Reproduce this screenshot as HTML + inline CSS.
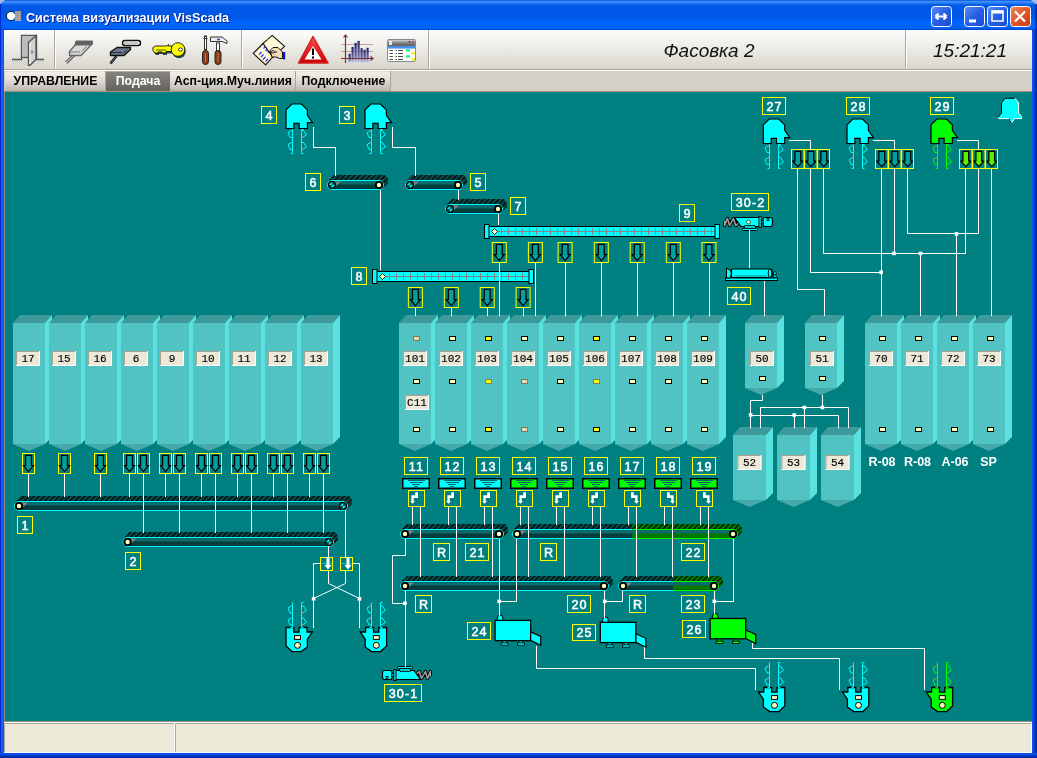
<!DOCTYPE html><html><head><meta charset="utf-8"><title>VisScada</title><style>html,body{margin:0;padding:0;width:1037px;height:758px;overflow:hidden;background:#0041c8}svg{display:block;will-change:transform}</style></head><body>
<svg width="1037" height="758" viewBox="0 0 1037 758">
<defs>
<pattern id="hatch" width="3.6" height="5" patternUnits="userSpaceOnUse" patternTransform="rotate(45)"><rect width="3.6" height="5" fill="#0b4848"/><rect x="0" y="0" width="1.1" height="5" fill="#000"/></pattern>
<pattern id="ghatch" width="3.6" height="5" patternUnits="userSpaceOnUse" patternTransform="rotate(45)"><rect width="3.6" height="5" fill="#007800"/><rect x="0" y="0" width="1.1" height="5" fill="#000"/></pattern>
<linearGradient id="tbar" x1="0" y1="0" x2="0" y2="1">
<stop offset="0" stop-color="#0040d0"/><stop offset="0.04" stop-color="#3d95ff"/><stop offset="0.1" stop-color="#2a7cf5"/><stop offset="0.17" stop-color="#0058e6"/><stop offset="0.6" stop-color="#0058e8"/><stop offset="0.72" stop-color="#0066ff"/><stop offset="0.93" stop-color="#0064fc"/><stop offset="1" stop-color="#0041c8"/></linearGradient>
<linearGradient id="tool" x1="0" y1="0" x2="0" y2="1"><stop offset="0" stop-color="#fdfdfc"/><stop offset="0.35" stop-color="#f1f0ec"/><stop offset="1" stop-color="#d9d5cc"/></linearGradient>
<linearGradient id="tab" x1="0" y1="0" x2="0" y2="1"><stop offset="0" stop-color="#f2f0e6"/><stop offset="0.5" stop-color="#dcdad2"/><stop offset="1" stop-color="#bab8b1"/></linearGradient><linearGradient id="tabsel" x1="0" y1="0" x2="0" y2="1"><stop offset="0" stop-color="#878580"/><stop offset="1" stop-color="#64625c"/></linearGradient>
<linearGradient id="btn" x1="0" y1="0" x2="1" y2="1"><stop offset="0" stop-color="#5a8df5"/><stop offset="0.5" stop-color="#2660e6"/><stop offset="1" stop-color="#1a48d0"/></linearGradient>
<linearGradient id="cbtn" x1="0" y1="0" x2="1" y2="1"><stop offset="0" stop-color="#f08a60"/><stop offset="0.5" stop-color="#e2572a"/><stop offset="1" stop-color="#c43c14"/></linearGradient>
<linearGradient id="frameR" x1="0" y1="0" x2="1" y2="0"><stop offset="0" stop-color="#0a5cf8"/><stop offset="1" stop-color="#0020a0"/></linearGradient>
<linearGradient id="frameB" x1="0" y1="0" x2="0" y2="1"><stop offset="0" stop-color="#0a5cf8"/><stop offset="1" stop-color="#00209a"/></linearGradient>
<linearGradient id="frameL" x1="0" y1="0" x2="1" y2="0"><stop offset="0" stop-color="#0010c8"/><stop offset="0.45" stop-color="#1a6cf8"/><stop offset="1" stop-color="#0a4ae0"/></linearGradient>
<linearGradient id="warn" x1="0" y1="0" x2="0" y2="1"><stop offset="0" stop-color="#ff5050"/><stop offset="1" stop-color="#c80000"/></linearGradient>
</defs>
<rect x="0" y="0" width="1037" height="758" fill="#0a50e0" />
<rect x="0" y="0" width="1037" height="30" fill="url(#tbar)" />
<rect x="0" y="30" width="4" height="728" fill="url(#frameL)" />
<rect x="1032" y="30" width="5" height="728" fill="url(#frameR)" />
<rect x="0" y="753" width="1037" height="5" fill="url(#frameB)" />
<polygon points="0,0 5,0 0,4" fill="#a9b9e2"/><polygon points="1037,0 1031,0 1037,5" fill="#a9b9e2"/>
<rect x="1035" y="4" width="2" height="26" fill="#0020a8" opacity="0.7"/><rect x="0" y="4" width="1" height="26" fill="#0018c0" opacity="0.7"/>
<rect x="4" y="30" width="1028" height="39" fill="url(#tool)" />
<rect x="4" y="69" width="1028" height="1" fill="#aca899" />
<rect x="4" y="70" width="1028" height="1.5" fill="#ffffff" />
<rect x="4" y="71" width="1028" height="21" fill="#d4d0c8" />
<rect x="54" y="30" width="1" height="39" fill="#aca899" />
<rect x="55" y="30" width="1" height="39" fill="#ffffff" />
<rect x="241" y="30" width="1" height="39" fill="#aca899" />
<rect x="242" y="30" width="1" height="39" fill="#ffffff" />
<rect x="428" y="30" width="1" height="39" fill="#aca899" />
<rect x="429" y="30" width="1" height="39" fill="#ffffff" />
<rect x="905" y="30" width="1" height="39" fill="#aca899" />
<rect x="906" y="30" width="1" height="39" fill="#ffffff" />
<rect x="5" y="71.5" width="101" height="19.5" fill="url(#tab)" />
<rect x="105" y="71" width="1" height="20" fill="#a8a498" />
<rect x="5" y="90" width="101" height="1" fill="#b8b4a8" />
<text x="55.5" y="85" font-family="Liberation Sans" font-size="12.3" fill="#000000" text-anchor="middle" font-weight="bold" font-style="normal" >УПРАВЛЕНИЕ</text>
<rect x="106" y="71.5" width="64" height="19.5" fill="url(#tabsel)" />
<text x="138.0" y="85" font-family="Liberation Sans" font-size="12.3" fill="#ffffff" text-anchor="middle" font-weight="bold" font-style="normal" >Подача</text>
<rect x="170" y="71.5" width="126" height="19.5" fill="url(#tab)" />
<rect x="295" y="71" width="1" height="20" fill="#a8a498" />
<rect x="170" y="90" width="126" height="1" fill="#b8b4a8" />
<text x="233.0" y="85" font-family="Liberation Sans" font-size="12.3" fill="#000000" text-anchor="middle" font-weight="bold" font-style="normal" >Асп-ция.Муч.линия</text>
<rect x="296" y="71.5" width="95" height="19.5" fill="url(#tab)" />
<rect x="390" y="71" width="1" height="20" fill="#a8a498" />
<rect x="296" y="90" width="95" height="1" fill="#b8b4a8" />
<text x="343.5" y="85" font-family="Liberation Sans" font-size="12.3" fill="#000000" text-anchor="middle" font-weight="bold" font-style="normal" >Подключение</text>
<rect x="4" y="92" width="1028" height="629" fill="#008080" />
<rect x="4" y="91" width="1028" height="1" fill="#a09080" />
<rect x="4" y="91" width="1" height="631" fill="#a09080" />
<rect x="4" y="721" width="1028" height="1" fill="#a09080" />
<rect x="4" y="722" width="1028" height="31" fill="#ece9d8" />
<rect x="4" y="722" width="1028" height="1" fill="#ffffff" />
<path d="M4.5,752 V723.5 H174" stroke="#aca899" fill="none"/>
<path d="M4.5,752.5 H174.5 V723" stroke="#ffffff" fill="none"/>
<path d="M175.5,752 V723.5 H1031" stroke="#aca899" fill="none"/>
<path d="M175.5,752.5 H1031.5 V723" stroke="#ffffff" fill="none"/>
<g>
<circle cx="11" cy="16" r="4.6" fill="#fff" stroke="#000" stroke-width="0.8"/>
<rect x="15" y="11" width="6" height="10" fill="#fff"/>
<rect x="15" y="11.5" width="6" height="0.9" fill="#333"/>
<rect x="15" y="13.5" width="6" height="0.9" fill="#333"/>
<rect x="15" y="15.5" width="6" height="0.9" fill="#333"/>
<rect x="15" y="17.5" width="6" height="0.9" fill="#333"/>
<rect x="15" y="19.5" width="6" height="0.9" fill="#333"/>
<text x="27" y="22.8" font-family="Liberation Sans" font-size="12.6" fill="#0a1e8c" text-anchor="start" font-weight="bold" font-style="normal" >Система визуализации VisScada</text>
<text x="26" y="21.8" font-family="Liberation Sans" font-size="12.6" fill="#ffffff" text-anchor="start" font-weight="bold" font-style="normal" >Система визуализации VisScada</text>
</g>
<rect x="931.5" y="6.5" width="20" height="20" rx="3" fill="url(#btn)" stroke="#ffffff" stroke-width="1"/>
<rect x="964.5" y="6.5" width="20" height="20" rx="3" fill="url(#btn)" stroke="#ffffff" stroke-width="1"/>
<rect x="987.5" y="6.5" width="20" height="20" rx="3" fill="url(#btn)" stroke="#ffffff" stroke-width="1"/>
<rect x="1010.5" y="6.5" width="20" height="20" rx="3" fill="url(#cbtn)" stroke="#ffffff" stroke-width="1"/>
<path d="M935.5,16.5 H946.5 M935.5,16.5 L938.5,13.5 M935.5,16.5 L938.5,19.5 M946.5,16.5 L943.5,13.5 M946.5,16.5 L943.5,19.5" stroke="#fff" stroke-width="2.2" fill="none"/>
<rect x="969" y="19.5" width="7" height="3" fill="#fff" />
<rect x="992" y="11" width="11" height="10" fill="none" stroke="#fff" stroke-width="1.5"/><rect x="992" y="10.5" width="11" height="3" fill="#fff"/>
<path d="M1015,11.5 L1025,21.5 M1025,11.5 L1015,21.5" stroke="#fff" stroke-width="2.2"/>
<text x="709" y="57" font-family="Liberation Sans" font-size="19" fill="#111" text-anchor="middle" font-weight="normal" font-style="italic" >Фасовка 2</text>
<text x="970" y="57" font-family="Liberation Sans" font-size="19" fill="#111" text-anchor="middle" font-weight="normal" font-style="italic" >15:21:21</text>
<pattern id="dith" width="2" height="2" patternUnits="userSpaceOnUse"><rect width="2" height="2" fill="#ecebe6"/><rect width="1" height="1" fill="#c4c4c4"/><rect x="1" y="1" width="1" height="1" fill="#c4c4c4"/></pattern>
<rect x="12" y="60" width="32" height="6" fill="url(#dith)" />
<path d="M12,59.5 H21.5 V35.5 H36.5 V59.5 H44" stroke="#555" stroke-width="1.4" fill="none"/>
<rect x="22" y="36" width="14" height="21" fill="#bdbdbd" />
<path d="M22,57.5 H29" stroke="#555" stroke-width="1.4"/>
<polygon points="28.5,42.2 36,35.8 36,59.3 30,65.3 28.5,65.3" fill="#d0d0d0" stroke="#555" stroke-width="1.4" stroke-linejoin="miter" />
<path d="M30,43 V64" stroke="#fff" stroke-width="1"/>
<ellipse cx="31.8" cy="52" rx="1" ry="1.5" fill="none" stroke="#777" stroke-width="0.8"/>
<path d="M77.5,53 L67,63.5 M75,53 L65.5,62" stroke="#666" stroke-width="1.1" fill="none"/>
<path d="M76,44 H92 L81,55.5 H69.5 V51.5 Z" fill="#d8d8d8" stroke="#666" stroke-width="1.3" stroke-linejoin="round"/>
<path d="M76,41 H92.5 V44 L91,45 H75 Z" fill="#606060" stroke="#666" stroke-width="1"/>
<path d="M70,52 H80.5 M86.5,46.5 L82,51" stroke="#777" stroke-width="1" fill="none"/>
<rect x="122.5" y="40.5" width="18" height="5" rx="2.5" fill="#fff" stroke="#111" stroke-width="1.5"/>
<path d="M124.5,43 H138.5" stroke="#222" stroke-width="1" stroke-dasharray="1,1"/>
<path d="M116.5,56 L110.5,63.5" stroke="#111" stroke-width="2.6"/><path d="M116.5,56 L110.5,63.5" stroke="#5b6f88" stroke-width="1"/>
<path d="M117,47.5 H130.5 V49.5 L124,55.5 H110.5 V52 Z" fill="#6a7a90" stroke="#111" stroke-width="1.4" stroke-linejoin="round"/>
<path d="M111,52.5 H122 M127.5,49.5 L123,53.5" stroke="#222" stroke-width="0.9" fill="none"/>
<g transform="translate(1,2)" fill="#2a4848"><path d="M153,47.5 L155.5,46 H167 L168.5,44.5 V46 H172 V51.5 H166 V53 H162 V52 H158 V53 H155 L153,50.5 Z"/><circle cx="178" cy="49.5" r="6.8"/></g>
<path d="M153,47.5 L155.5,46 H167 L168.5,44.5 V46 H172 V51.5 H166 V53 H162 V52 H158 V53 H155 L153,50.5 Z" fill="#ffff00" stroke="#111" stroke-width="0.9" stroke-linejoin="round"/>
<circle cx="178" cy="49.5" r="6.8" fill="#ffff00" stroke="#111" stroke-width="0.9"/>
<path d="M156,50 H166" stroke="#222" stroke-width="0.8"/>
<ellipse cx="180.5" cy="49.5" rx="2" ry="1.6" fill="#fff" stroke="#222" stroke-width="0.9"/>
<rect x="204.5" y="36" width="2" height="14" fill="#fff" stroke="#333" stroke-width="1"/>
<path d="M203.5,38.5 H207.5" stroke="#333" stroke-width="1"/>
<rect x="202.5" y="50.5" width="6" height="14" rx="3" fill="#8a3c16" stroke="#222" stroke-width="1"/>
<path d="M205.5,53 V62" stroke="#d08050" stroke-width="0.8"/>
<path d="M210.5,37 H222 L227,41 V43.5 L222,41.5 H210.5 Z" fill="#eee" stroke="#333" stroke-width="1"/>
<rect x="216.5" y="43" width="3" height="8" fill="#fff" stroke="#333" stroke-width="1"/>
<rect x="215" y="50.5" width="6" height="14" rx="3" fill="#8a3c16" stroke="#222" stroke-width="1"/>
<path d="M218,53 V62" stroke="#d08050" stroke-width="0.8"/>
<path d="M217,39.5 H220" stroke="#2040ff" stroke-width="1.5"/>
<path d="M263,43.5 L272.2,35.3 L284.6,46.3 L272.7,57.2 Z" fill="#fff8d8" stroke="#111" stroke-width="1.1" stroke-linejoin="round"/>
<path d="M253.2,53.4 L263,43.5 L272.7,57.2 L265.6,64.8 Z" fill="#fff8d8" stroke="#111" stroke-width="1.1" stroke-linejoin="round"/>
<path d="M254.5,53.4 L263,44.8 M254.5,54 L265.5,63.5 M264,42.5 L271.5,36" stroke="#b08040" stroke-width="0.9" stroke-dasharray="1,1" fill="none"/>
<path d="M259,54.5 L261.5,52 M261,57 L263.5,54.5 M263,59.5 L265.5,57 M265.5,61.5 L268,59 M263.5,48.5 L265.5,46.5 M265.5,51 L267.5,49" stroke="#1a30ff" stroke-width="1.2" fill="none"/>
<path d="M270,50.5 L273,47.5 H278 L282.5,52 V58.5 L279.5,58.5 L276,57 H272 Z" fill="#f5dcb0" stroke="#111" stroke-width="1"/>
<path d="M267.5,52 H277" stroke="#111" stroke-width="1"/><circle cx="273" cy="51.8" r="1.3" fill="#fff" stroke="#111" stroke-width="0.8"/>
<rect x="283" y="52" width="2.2" height="7.5" fill="#1010ff"/>
<path d="M313,36.5 L328,63 H298.5 Z" fill="url(#warn)" stroke="#d02020" stroke-width="1.5" stroke-linejoin="round"/>
<path d="M313,46 L321.5,59.5 H304.5 Z" fill="#fff"/>
<rect x="312" y="48.5" width="2" height="6.5" fill="#000"/><rect x="312" y="56.5" width="2" height="2" fill="#000"/>
<linearGradient id="barg" x1="0" y1="0" x2="0" y2="1"><stop offset="0" stop-color="#20206e"/><stop offset="0.7" stop-color="#6a6aa8"/><stop offset="1" stop-color="#c8c8ec"/></linearGradient>
<path d="M341,44.5 H373 M341,51.5 H373" stroke="#c8a0a0" stroke-width="1" fill="none"/>
<rect x="348.5" y="53.9" width="2.2" height="8.600000000000001" fill="url(#barg)"/>
<rect x="351.5" y="47" width="2.2" height="15.5" fill="url(#barg)"/>
<rect x="354.5" y="42.9" width="2.2" height="19.6" fill="url(#barg)"/>
<rect x="357.5" y="40.9" width="2.2" height="21.6" fill="url(#barg)"/>
<rect x="360.5" y="48.2" width="2.2" height="14.299999999999997" fill="url(#barg)"/>
<rect x="363.5" y="49.8" width="2.2" height="12.700000000000003" fill="url(#barg)"/>
<rect x="366.5" y="47.8" width="2.2" height="14.700000000000003" fill="url(#barg)"/>
<path d="M345.5,35 V63 M341,58.5 H373" stroke="#7a3030" stroke-width="1.2" fill="none"/>
<path d="M343.5,37.5 L345.5,35 L347.5,37.5 M370.5,56.5 L373,58.5 L370.5,60.5" stroke="#7a3030" stroke-width="1.2" fill="none"/>
<linearGradient id="twg" x1="0" y1="0" x2="0" y2="1"><stop offset="0" stop-color="#d0d0d0"/><stop offset="0.5" stop-color="#808080"/><stop offset="1" stop-color="#606060"/></linearGradient>
<rect x="387.5" y="39.5" width="28" height="22" rx="1" fill="#fff" stroke="#8a8a8a" stroke-width="1"/>
<rect x="388" y="40" width="27" height="6" fill="url(#twg)"/>
<rect x="389" y="41" width="3" height="4" fill="#e8e8e8"/><rect x="412" y="41" width="2" height="1.5" fill="#e03030"/><rect x="408.5" y="41" width="2" height="1.5" fill="#3050a0"/>
<rect x="388" y="46" width="27" height="2.6" fill="#4a90e8"/>
<path d="M389.5,50.5 H393 M395.5,50.5 H397 M398,50.5 H403" stroke="#333" stroke-width="0.9"/>
<path d="M389.5,53.5 H393 M395.5,53.5 H397 M398,53.5 H403" stroke="#333" stroke-width="0.9"/>
<path d="M389.5,56.5 H393 M395.5,56.5 H397 M398,56.5 H403" stroke="#333" stroke-width="0.9"/>
<path d="M389.5,59.5 H393 M395.5,59.5 H397 M398,59.5 H403" stroke="#333" stroke-width="0.9"/>
<rect x="406" y="49.2" width="4" height="2.4" fill="#30e890"/><rect x="406" y="55.2" width="4" height="2.4" fill="#30e890"/>
<rect x="411.5" y="52.2" width="3.5" height="2.4" fill="#f0f020"/><rect x="411.5" y="58.2" width="3.5" height="2.4" fill="#f0f020"/>
<polygon points="20,315 52,315 45,323 13,323" fill="#3c9a9a" />
<rect x="13" y="323" width="32" height="121" fill="#52c3c3" />
<polygon points="45,323 52,315 52,437 45,444" fill="#5ce1e1" />
<polygon points="13,444 45,444 29.0,451" fill="#46a9a9" />
<polygon points="56,315 88,315 81,323 49,323" fill="#3c9a9a" />
<rect x="49" y="323" width="32" height="121" fill="#52c3c3" />
<polygon points="81,323 88,315 88,437 81,444" fill="#5ce1e1" />
<polygon points="49,444 81,444 65.0,451" fill="#46a9a9" />
<polygon points="92,315 124,315 117,323 85,323" fill="#3c9a9a" />
<rect x="85" y="323" width="32" height="121" fill="#52c3c3" />
<polygon points="117,323 124,315 124,437 117,444" fill="#5ce1e1" />
<polygon points="85,444 117,444 101.0,451" fill="#46a9a9" />
<polygon points="128,315 160,315 153,323 121,323" fill="#3c9a9a" />
<rect x="121" y="323" width="32" height="121" fill="#52c3c3" />
<polygon points="153,323 160,315 160,437 153,444" fill="#5ce1e1" />
<polygon points="121,444 153,444 137.0,451" fill="#46a9a9" />
<polygon points="164,315 196,315 189,323 157,323" fill="#3c9a9a" />
<rect x="157" y="323" width="32" height="121" fill="#52c3c3" />
<polygon points="189,323 196,315 196,437 189,444" fill="#5ce1e1" />
<polygon points="157,444 189,444 173.0,451" fill="#46a9a9" />
<polygon points="200,315 232,315 225,323 193,323" fill="#3c9a9a" />
<rect x="193" y="323" width="32" height="121" fill="#52c3c3" />
<polygon points="225,323 232,315 232,437 225,444" fill="#5ce1e1" />
<polygon points="193,444 225,444 209.0,451" fill="#46a9a9" />
<polygon points="236,315 268,315 261,323 229,323" fill="#3c9a9a" />
<rect x="229" y="323" width="32" height="121" fill="#52c3c3" />
<polygon points="261,323 268,315 268,437 261,444" fill="#5ce1e1" />
<polygon points="229,444 261,444 245.0,451" fill="#46a9a9" />
<polygon points="272,315 304,315 297,323 265,323" fill="#3c9a9a" />
<rect x="265" y="323" width="32" height="121" fill="#52c3c3" />
<polygon points="297,323 304,315 304,437 297,444" fill="#5ce1e1" />
<polygon points="265,444 297,444 281.0,451" fill="#46a9a9" />
<polygon points="308,315 340,315 333,323 301,323" fill="#3c9a9a" />
<rect x="301" y="323" width="32" height="121" fill="#52c3c3" />
<polygon points="333,323 340,315 340,437 333,444" fill="#5ce1e1" />
<polygon points="301,444 333,444 317.0,451" fill="#46a9a9" />
<rect x="16" y="351" width="24" height="15" fill="#ece9d8" />
<path d="M16.5,366 V351.5 H40" stroke="#b0a090" fill="none"/>
<path d="M16,365.5 H39.5 V351" stroke="#fff" fill="none"/>
<text x="28.0" y="362.4" font-family="Liberation Mono" font-size="11" fill="#000" text-anchor="middle" font-weight="normal" font-style="normal" stroke="#000" stroke-width="0.15">17</text>
<rect x="52" y="351" width="24" height="15" fill="#ece9d8" />
<path d="M52.5,366 V351.5 H76" stroke="#b0a090" fill="none"/>
<path d="M52,365.5 H75.5 V351" stroke="#fff" fill="none"/>
<text x="64.0" y="362.4" font-family="Liberation Mono" font-size="11" fill="#000" text-anchor="middle" font-weight="normal" font-style="normal" stroke="#000" stroke-width="0.15">15</text>
<rect x="88" y="351" width="24" height="15" fill="#ece9d8" />
<path d="M88.5,366 V351.5 H112" stroke="#b0a090" fill="none"/>
<path d="M88,365.5 H111.5 V351" stroke="#fff" fill="none"/>
<text x="100.0" y="362.4" font-family="Liberation Mono" font-size="11" fill="#000" text-anchor="middle" font-weight="normal" font-style="normal" stroke="#000" stroke-width="0.15">16</text>
<rect x="124" y="351" width="24" height="15" fill="#ece9d8" />
<path d="M124.5,366 V351.5 H148" stroke="#b0a090" fill="none"/>
<path d="M124,365.5 H147.5 V351" stroke="#fff" fill="none"/>
<text x="136.0" y="362.4" font-family="Liberation Mono" font-size="11" fill="#000" text-anchor="middle" font-weight="normal" font-style="normal" stroke="#000" stroke-width="0.15">6</text>
<rect x="160" y="351" width="24" height="15" fill="#ece9d8" />
<path d="M160.5,366 V351.5 H184" stroke="#b0a090" fill="none"/>
<path d="M160,365.5 H183.5 V351" stroke="#fff" fill="none"/>
<text x="172.0" y="362.4" font-family="Liberation Mono" font-size="11" fill="#000" text-anchor="middle" font-weight="normal" font-style="normal" stroke="#000" stroke-width="0.15">9</text>
<rect x="196" y="351" width="24" height="15" fill="#ece9d8" />
<path d="M196.5,366 V351.5 H220" stroke="#b0a090" fill="none"/>
<path d="M196,365.5 H219.5 V351" stroke="#fff" fill="none"/>
<text x="208.0" y="362.4" font-family="Liberation Mono" font-size="11" fill="#000" text-anchor="middle" font-weight="normal" font-style="normal" stroke="#000" stroke-width="0.15">10</text>
<rect x="232" y="351" width="24" height="15" fill="#ece9d8" />
<path d="M232.5,366 V351.5 H256" stroke="#b0a090" fill="none"/>
<path d="M232,365.5 H255.5 V351" stroke="#fff" fill="none"/>
<text x="244.0" y="362.4" font-family="Liberation Mono" font-size="11" fill="#000" text-anchor="middle" font-weight="normal" font-style="normal" stroke="#000" stroke-width="0.15">11</text>
<rect x="268" y="351" width="24" height="15" fill="#ece9d8" />
<path d="M268.5,366 V351.5 H292" stroke="#b0a090" fill="none"/>
<path d="M268,365.5 H291.5 V351" stroke="#fff" fill="none"/>
<text x="280.0" y="362.4" font-family="Liberation Mono" font-size="11" fill="#000" text-anchor="middle" font-weight="normal" font-style="normal" stroke="#000" stroke-width="0.15">12</text>
<rect x="304" y="351" width="24" height="15" fill="#ece9d8" />
<path d="M304.5,366 V351.5 H328" stroke="#b0a090" fill="none"/>
<path d="M304,365.5 H327.5 V351" stroke="#fff" fill="none"/>
<text x="316.0" y="362.4" font-family="Liberation Mono" font-size="11" fill="#000" text-anchor="middle" font-weight="normal" font-style="normal" stroke="#000" stroke-width="0.15">13</text>
<polygon points="406,315 438,315 431,323 399,323" fill="#3c9a9a" />
<rect x="399" y="323" width="32" height="121" fill="#52c3c3" />
<polygon points="431,323 438,315 438,437 431,444" fill="#5ce1e1" />
<polygon points="399,444 431,444 415.0,451" fill="#46a9a9" />
<polygon points="442,315 474,315 467,323 435,323" fill="#3c9a9a" />
<rect x="435" y="323" width="32" height="121" fill="#52c3c3" />
<polygon points="467,323 474,315 474,437 467,444" fill="#5ce1e1" />
<polygon points="435,444 467,444 451.0,451" fill="#46a9a9" />
<polygon points="478,315 510,315 503,323 471,323" fill="#3c9a9a" />
<rect x="471" y="323" width="32" height="121" fill="#52c3c3" />
<polygon points="503,323 510,315 510,437 503,444" fill="#5ce1e1" />
<polygon points="471,444 503,444 487.0,451" fill="#46a9a9" />
<polygon points="514,315 546,315 539,323 507,323" fill="#3c9a9a" />
<rect x="507" y="323" width="32" height="121" fill="#52c3c3" />
<polygon points="539,323 546,315 546,437 539,444" fill="#5ce1e1" />
<polygon points="507,444 539,444 523.0,451" fill="#46a9a9" />
<polygon points="550,315 582,315 575,323 543,323" fill="#3c9a9a" />
<rect x="543" y="323" width="32" height="121" fill="#52c3c3" />
<polygon points="575,323 582,315 582,437 575,444" fill="#5ce1e1" />
<polygon points="543,444 575,444 559.0,451" fill="#46a9a9" />
<polygon points="586,315 618,315 611,323 579,323" fill="#3c9a9a" />
<rect x="579" y="323" width="32" height="121" fill="#52c3c3" />
<polygon points="611,323 618,315 618,437 611,444" fill="#5ce1e1" />
<polygon points="579,444 611,444 595.0,451" fill="#46a9a9" />
<polygon points="622,315 654,315 647,323 615,323" fill="#3c9a9a" />
<rect x="615" y="323" width="32" height="121" fill="#52c3c3" />
<polygon points="647,323 654,315 654,437 647,444" fill="#5ce1e1" />
<polygon points="615,444 647,444 631.0,451" fill="#46a9a9" />
<polygon points="658,315 690,315 683,323 651,323" fill="#3c9a9a" />
<rect x="651" y="323" width="32" height="121" fill="#52c3c3" />
<polygon points="683,323 690,315 690,437 683,444" fill="#5ce1e1" />
<polygon points="651,444 683,444 667.0,451" fill="#46a9a9" />
<polygon points="694,315 726,315 719,323 687,323" fill="#3c9a9a" />
<rect x="687" y="323" width="32" height="121" fill="#52c3c3" />
<polygon points="719,323 726,315 726,437 719,444" fill="#5ce1e1" />
<polygon points="687,444 719,444 703.0,451" fill="#46a9a9" />
<rect x="403" y="351" width="24" height="15" fill="#ece9d8" />
<path d="M403.5,366 V351.5 H427" stroke="#b0a090" fill="none"/>
<path d="M403,365.5 H426.5 V351" stroke="#fff" fill="none"/>
<text x="415.0" y="362.4" font-family="Liberation Mono" font-size="11" fill="#000" text-anchor="middle" font-weight="normal" font-style="normal" stroke="#000" stroke-width="0.15">101</text>
<rect x="413.5" y="336.5" width="6" height="4" fill="#e8dcb0" stroke="#807860" stroke-width="1" />
<rect x="413.5" y="379.5" width="6" height="4" fill="#ffffc0" stroke="#000" stroke-width="1" />
<rect x="413.5" y="427.5" width="6" height="4" fill="#ffffc0" stroke="#000" stroke-width="1" />
<rect x="439" y="351" width="24" height="15" fill="#ece9d8" />
<path d="M439.5,366 V351.5 H463" stroke="#b0a090" fill="none"/>
<path d="M439,365.5 H462.5 V351" stroke="#fff" fill="none"/>
<text x="451.0" y="362.4" font-family="Liberation Mono" font-size="11" fill="#000" text-anchor="middle" font-weight="normal" font-style="normal" stroke="#000" stroke-width="0.15">102</text>
<rect x="449.5" y="336.5" width="6" height="4" fill="#ffffc0" stroke="#000" stroke-width="1" />
<rect x="449.5" y="379.5" width="6" height="4" fill="#ffffc0" stroke="#000" stroke-width="1" />
<rect x="449.5" y="427.5" width="6" height="4" fill="#ffffc0" stroke="#000" stroke-width="1" />
<rect x="475" y="351" width="24" height="15" fill="#ece9d8" />
<path d="M475.5,366 V351.5 H499" stroke="#b0a090" fill="none"/>
<path d="M475,365.5 H498.5 V351" stroke="#fff" fill="none"/>
<text x="487.0" y="362.4" font-family="Liberation Mono" font-size="11" fill="#000" text-anchor="middle" font-weight="normal" font-style="normal" stroke="#000" stroke-width="0.15">103</text>
<rect x="485.5" y="336.5" width="6" height="4" fill="#ffff00" stroke="#000" stroke-width="1" />
<rect x="485.5" y="379.5" width="6" height="4" fill="#ffff00" stroke="#808060" stroke-width="1" />
<rect x="485.5" y="427.5" width="6" height="4" fill="#ffff00" stroke="#000" stroke-width="1" />
<rect x="511" y="351" width="24" height="15" fill="#ece9d8" />
<path d="M511.5,366 V351.5 H535" stroke="#b0a090" fill="none"/>
<path d="M511,365.5 H534.5 V351" stroke="#fff" fill="none"/>
<text x="523.0" y="362.4" font-family="Liberation Mono" font-size="11" fill="#000" text-anchor="middle" font-weight="normal" font-style="normal" stroke="#000" stroke-width="0.15">104</text>
<rect x="521.5" y="336.5" width="6" height="4" fill="#ffffc0" stroke="#000" stroke-width="1" />
<rect x="521.5" y="379.5" width="6" height="4" fill="#e8dcb0" stroke="#807860" stroke-width="1" />
<rect x="521.5" y="427.5" width="6" height="4" fill="#e8dcb0" stroke="#807860" stroke-width="1" />
<rect x="547" y="351" width="24" height="15" fill="#ece9d8" />
<path d="M547.5,366 V351.5 H571" stroke="#b0a090" fill="none"/>
<path d="M547,365.5 H570.5 V351" stroke="#fff" fill="none"/>
<text x="559.0" y="362.4" font-family="Liberation Mono" font-size="11" fill="#000" text-anchor="middle" font-weight="normal" font-style="normal" stroke="#000" stroke-width="0.15">105</text>
<rect x="557.5" y="336.5" width="6" height="4" fill="#ffffc0" stroke="#000" stroke-width="1" />
<rect x="557.5" y="379.5" width="6" height="4" fill="#ffffc0" stroke="#000" stroke-width="1" />
<rect x="557.5" y="427.5" width="6" height="4" fill="#ffffc0" stroke="#000" stroke-width="1" />
<rect x="583" y="351" width="24" height="15" fill="#ece9d8" />
<path d="M583.5,366 V351.5 H607" stroke="#b0a090" fill="none"/>
<path d="M583,365.5 H606.5 V351" stroke="#fff" fill="none"/>
<text x="595.0" y="362.4" font-family="Liberation Mono" font-size="11" fill="#000" text-anchor="middle" font-weight="normal" font-style="normal" stroke="#000" stroke-width="0.15">106</text>
<rect x="593.5" y="336.5" width="6" height="4" fill="#ffff00" stroke="#000" stroke-width="1" />
<rect x="593.5" y="379.5" width="6" height="4" fill="#ffff00" stroke="#808060" stroke-width="1" />
<rect x="593.5" y="427.5" width="6" height="4" fill="#ffff00" stroke="#000" stroke-width="1" />
<rect x="619" y="351" width="24" height="15" fill="#ece9d8" />
<path d="M619.5,366 V351.5 H643" stroke="#b0a090" fill="none"/>
<path d="M619,365.5 H642.5 V351" stroke="#fff" fill="none"/>
<text x="631.0" y="362.4" font-family="Liberation Mono" font-size="11" fill="#000" text-anchor="middle" font-weight="normal" font-style="normal" stroke="#000" stroke-width="0.15">107</text>
<rect x="629.5" y="336.5" width="6" height="4" fill="#ffffc0" stroke="#000" stroke-width="1" />
<rect x="629.5" y="379.5" width="6" height="4" fill="#ffffc0" stroke="#000" stroke-width="1" />
<rect x="629.5" y="427.5" width="6" height="4" fill="#ffffc0" stroke="#000" stroke-width="1" />
<rect x="655" y="351" width="24" height="15" fill="#ece9d8" />
<path d="M655.5,366 V351.5 H679" stroke="#b0a090" fill="none"/>
<path d="M655,365.5 H678.5 V351" stroke="#fff" fill="none"/>
<text x="667.0" y="362.4" font-family="Liberation Mono" font-size="11" fill="#000" text-anchor="middle" font-weight="normal" font-style="normal" stroke="#000" stroke-width="0.15">108</text>
<rect x="665.5" y="336.5" width="6" height="4" fill="#ffffc0" stroke="#000" stroke-width="1" />
<rect x="665.5" y="379.5" width="6" height="4" fill="#ffffc0" stroke="#000" stroke-width="1" />
<rect x="665.5" y="427.5" width="6" height="4" fill="#ffffc0" stroke="#000" stroke-width="1" />
<rect x="691" y="351" width="24" height="15" fill="#ece9d8" />
<path d="M691.5,366 V351.5 H715" stroke="#b0a090" fill="none"/>
<path d="M691,365.5 H714.5 V351" stroke="#fff" fill="none"/>
<text x="703.0" y="362.4" font-family="Liberation Mono" font-size="11" fill="#000" text-anchor="middle" font-weight="normal" font-style="normal" stroke="#000" stroke-width="0.15">109</text>
<rect x="701.5" y="336.5" width="6" height="4" fill="#ffffc0" stroke="#000" stroke-width="1" />
<rect x="701.5" y="379.5" width="6" height="4" fill="#ffffc0" stroke="#000" stroke-width="1" />
<rect x="701.5" y="427.5" width="6" height="4" fill="#ffffc0" stroke="#000" stroke-width="1" />
<rect x="405" y="395" width="24" height="15" fill="#ece9d8" />
<path d="M405.5,410 V395.5 H429" stroke="#b0a090" fill="none"/>
<path d="M405,409.5 H428.5 V395" stroke="#fff" fill="none"/>
<text x="417.0" y="406.4" font-family="Liberation Mono" font-size="11" fill="#000" text-anchor="middle" font-weight="normal" font-style="normal" stroke="#000" stroke-width="0.15">C11</text>
<polygon points="752,315 784,315 777,323 745,323" fill="#3c9a9a" />
<rect x="745" y="323" width="32" height="65" fill="#52c3c3" />
<polygon points="777,323 784,315 784,381 777,388" fill="#5ce1e1" />
<polygon points="745,388 777,388 761.0,395" fill="#46a9a9" />
<polygon points="812,315 844,315 837,323 805,323" fill="#3c9a9a" />
<rect x="805" y="323" width="32" height="65" fill="#52c3c3" />
<polygon points="837,323 844,315 844,381 837,388" fill="#5ce1e1" />
<polygon points="805,388 837,388 821.0,395" fill="#46a9a9" />
<rect x="750" y="351" width="24" height="15" fill="#ece9d8" />
<path d="M750.5,366 V351.5 H774" stroke="#b0a090" fill="none"/>
<path d="M750,365.5 H773.5 V351" stroke="#fff" fill="none"/>
<text x="762.0" y="362.4" font-family="Liberation Mono" font-size="11" fill="#000" text-anchor="middle" font-weight="normal" font-style="normal" stroke="#000" stroke-width="0.15">50</text>
<rect x="759.5" y="336.5" width="6" height="4" fill="#ffffc0" stroke="#000" stroke-width="1" />
<rect x="759.5" y="376.5" width="6" height="4" fill="#ffffc0" stroke="#000" stroke-width="1" />
<rect x="810" y="351" width="24" height="15" fill="#ece9d8" />
<path d="M810.5,366 V351.5 H834" stroke="#b0a090" fill="none"/>
<path d="M810,365.5 H833.5 V351" stroke="#fff" fill="none"/>
<text x="822.0" y="362.4" font-family="Liberation Mono" font-size="11" fill="#000" text-anchor="middle" font-weight="normal" font-style="normal" stroke="#000" stroke-width="0.15">51</text>
<rect x="819.5" y="336.5" width="6" height="4" fill="#ffffc0" stroke="#000" stroke-width="1" />
<rect x="819.5" y="376.5" width="6" height="4" fill="#ffffc0" stroke="#000" stroke-width="1" />
<polygon points="740,427 773,427 766,435 733,435" fill="#3c9a9a" />
<rect x="733" y="435" width="33" height="65" fill="#52c3c3" />
<polygon points="766,435 773,427 773,493 766,500" fill="#5ce1e1" />
<polygon points="733,500 766,500 749.5,507" fill="#46a9a9" />
<polygon points="784,427 817,427 810,435 777,435" fill="#3c9a9a" />
<rect x="777" y="435" width="33" height="65" fill="#52c3c3" />
<polygon points="810,435 817,427 817,493 810,500" fill="#5ce1e1" />
<polygon points="777,500 810,500 793.5,507" fill="#46a9a9" />
<polygon points="828,427 861,427 854,435 821,435" fill="#3c9a9a" />
<rect x="821" y="435" width="33" height="65" fill="#52c3c3" />
<polygon points="854,435 861,427 861,493 854,500" fill="#5ce1e1" />
<polygon points="821,500 854,500 837.5,507" fill="#46a9a9" />
<rect x="737.5" y="455" width="24" height="15" fill="#ece9d8" />
<path d="M738.0,470 V455.5 H761.5" stroke="#b0a090" fill="none"/>
<path d="M737.5,469.5 H761.0 V455" stroke="#fff" fill="none"/>
<text x="749.5" y="466.4" font-family="Liberation Mono" font-size="11" fill="#000" text-anchor="middle" font-weight="normal" font-style="normal" stroke="#000" stroke-width="0.15">52</text>
<rect x="781.5" y="455" width="24" height="15" fill="#ece9d8" />
<path d="M782.0,470 V455.5 H805.5" stroke="#b0a090" fill="none"/>
<path d="M781.5,469.5 H805.0 V455" stroke="#fff" fill="none"/>
<text x="793.5" y="466.4" font-family="Liberation Mono" font-size="11" fill="#000" text-anchor="middle" font-weight="normal" font-style="normal" stroke="#000" stroke-width="0.15">53</text>
<rect x="825.5" y="455" width="24" height="15" fill="#ece9d8" />
<path d="M826.0,470 V455.5 H849.5" stroke="#b0a090" fill="none"/>
<path d="M825.5,469.5 H849.0 V455" stroke="#fff" fill="none"/>
<text x="837.5" y="466.4" font-family="Liberation Mono" font-size="11" fill="#000" text-anchor="middle" font-weight="normal" font-style="normal" stroke="#000" stroke-width="0.15">54</text>
<polygon points="872,315 904,315 897,323 865,323" fill="#3c9a9a" />
<rect x="865" y="323" width="32" height="121" fill="#52c3c3" />
<polygon points="897,323 904,315 904,437 897,444" fill="#5ce1e1" />
<polygon points="865,444 897,444 881.0,451" fill="#46a9a9" />
<polygon points="908,315 940,315 933,323 901,323" fill="#3c9a9a" />
<rect x="901" y="323" width="32" height="121" fill="#52c3c3" />
<polygon points="933,323 940,315 940,437 933,444" fill="#5ce1e1" />
<polygon points="901,444 933,444 917.0,451" fill="#46a9a9" />
<polygon points="944,315 976,315 969,323 937,323" fill="#3c9a9a" />
<rect x="937" y="323" width="32" height="121" fill="#52c3c3" />
<polygon points="969,323 976,315 976,437 969,444" fill="#5ce1e1" />
<polygon points="937,444 969,444 953.0,451" fill="#46a9a9" />
<polygon points="980,315 1012,315 1005,323 973,323" fill="#3c9a9a" />
<rect x="973" y="323" width="32" height="121" fill="#52c3c3" />
<polygon points="1005,323 1012,315 1012,437 1005,444" fill="#5ce1e1" />
<polygon points="973,444 1005,444 989.0,451" fill="#46a9a9" />
<rect x="869" y="351" width="24" height="15" fill="#ece9d8" />
<path d="M869.5,366 V351.5 H893" stroke="#b0a090" fill="none"/>
<path d="M869,365.5 H892.5 V351" stroke="#fff" fill="none"/>
<text x="881.0" y="362.4" font-family="Liberation Mono" font-size="11" fill="#000" text-anchor="middle" font-weight="normal" font-style="normal" stroke="#000" stroke-width="0.15">70</text>
<rect x="879.5" y="336.5" width="6" height="4" fill="#ffffc0" stroke="#000" stroke-width="1" />
<rect x="879.5" y="427.5" width="6" height="4" fill="#ffffc0" stroke="#000" stroke-width="1" />
<rect x="905" y="351" width="24" height="15" fill="#ece9d8" />
<path d="M905.5,366 V351.5 H929" stroke="#b0a090" fill="none"/>
<path d="M905,365.5 H928.5 V351" stroke="#fff" fill="none"/>
<text x="917.0" y="362.4" font-family="Liberation Mono" font-size="11" fill="#000" text-anchor="middle" font-weight="normal" font-style="normal" stroke="#000" stroke-width="0.15">71</text>
<rect x="915.5" y="336.5" width="6" height="4" fill="#ffffc0" stroke="#000" stroke-width="1" />
<rect x="915.5" y="427.5" width="6" height="4" fill="#ffffc0" stroke="#000" stroke-width="1" />
<rect x="941" y="351" width="24" height="15" fill="#ece9d8" />
<path d="M941.5,366 V351.5 H965" stroke="#b0a090" fill="none"/>
<path d="M941,365.5 H964.5 V351" stroke="#fff" fill="none"/>
<text x="953.0" y="362.4" font-family="Liberation Mono" font-size="11" fill="#000" text-anchor="middle" font-weight="normal" font-style="normal" stroke="#000" stroke-width="0.15">72</text>
<rect x="951.5" y="336.5" width="6" height="4" fill="#ffffc0" stroke="#000" stroke-width="1" />
<rect x="951.5" y="427.5" width="6" height="4" fill="#ffffc0" stroke="#000" stroke-width="1" />
<rect x="977" y="351" width="24" height="15" fill="#ece9d8" />
<path d="M977.5,366 V351.5 H1001" stroke="#b0a090" fill="none"/>
<path d="M977,365.5 H1000.5 V351" stroke="#fff" fill="none"/>
<text x="989.0" y="362.4" font-family="Liberation Mono" font-size="11" fill="#000" text-anchor="middle" font-weight="normal" font-style="normal" stroke="#000" stroke-width="0.15">73</text>
<rect x="987.5" y="336.5" width="6" height="4" fill="#ffffc0" stroke="#000" stroke-width="1" />
<rect x="987.5" y="427.5" width="6" height="4" fill="#ffffc0" stroke="#000" stroke-width="1" />
<text x="882" y="466" font-family="Liberation Sans" font-size="12.5" fill="#fff" text-anchor="middle" font-weight="bold" font-style="normal" >R-08</text>
<text x="917.5" y="466" font-family="Liberation Sans" font-size="12.5" fill="#fff" text-anchor="middle" font-weight="bold" font-style="normal" >R-08</text>
<text x="955" y="466" font-family="Liberation Sans" font-size="12.5" fill="#fff" text-anchor="middle" font-weight="bold" font-style="normal" >A-06</text>
<text x="988.5" y="466" font-family="Liberation Sans" font-size="12.5" fill="#fff" text-anchor="middle" font-weight="bold" font-style="normal" >SP</text>
<polygon points="334,175 385,175 388,179 388,183 383,188 330,188 329,180" fill="url(#hatch)" />
<g >
<rect x="327.5" y="180.5" width="56" height="9" rx="4.5" fill="#0b6a6a" stroke="#00ffff" stroke-width="1"/>
<rect x="330" y="184.5" width="51" height="4.5" fill="#053c3c" />
</g>
<polygon points="334,181.5 341,181.5 335,187" fill="#8a8a8a" opacity="0.85"/>
<circle cx="332" cy="185" r="4.1" fill="#000"/>
<circle cx="332" cy="185" r="3" fill="#0a4a4a"/>
<path d="M332,185 L332.3,182 L329,184.7 Z M332,185 L331.7,188 L335,185.3 Z" fill="#00ffff"/>
<circle cx="379" cy="185" r="4.1" fill="#000"/>
<circle cx="379" cy="185" r="2.2" fill="#ffffc0"/>
<polygon points="412,175 464,175 467,179 467,183 462,188 408,188 407,180" fill="url(#hatch)" />
<g >
<rect x="405.5" y="180.5" width="57" height="9" rx="4.5" fill="#0b6a6a" stroke="#00ffff" stroke-width="1"/>
<rect x="408" y="184.5" width="52" height="4.5" fill="#053c3c" />
</g>
<polygon points="412,181.5 419,181.5 413,187" fill="#8a8a8a" opacity="0.85"/>
<circle cx="410" cy="185" r="4.1" fill="#000"/>
<circle cx="410" cy="185" r="3" fill="#0a4a4a"/>
<path d="M410,185 L410.3,182 L407,184.7 Z M410,185 L409.7,188 L413,185.3 Z" fill="#00ffff"/>
<circle cx="458" cy="185" r="4.1" fill="#000"/>
<circle cx="458" cy="185" r="2.2" fill="#ffffc0"/>
<polygon points="452,199 504,199 507,203 507,207 502,212 448,212 447,204" fill="url(#hatch)" />
<g >
<rect x="445.5" y="204.5" width="57" height="9" rx="4.5" fill="#0b6a6a" stroke="#00ffff" stroke-width="1"/>
<rect x="448" y="208.5" width="52" height="4.5" fill="#053c3c" />
</g>
<polygon points="452,205.5 459,205.5 453,211" fill="#8a8a8a" opacity="0.85"/>
<circle cx="450" cy="209" r="4.1" fill="#000"/>
<circle cx="450" cy="209" r="3" fill="#0a4a4a"/>
<path d="M450,209 L450.3,206 L447,208.7 Z M450,209 L449.7,212 L453,209.3 Z" fill="#00ffff"/>
<circle cx="498" cy="209" r="4.1" fill="#000"/>
<circle cx="498" cy="209" r="2.2" fill="#ffffc0"/>
<polygon points="21,496 349,496 352,500 352,504 347,509 17,509 16,501" fill="url(#hatch)" />
<g >
<rect x="14.5" y="501.5" width="333" height="9" rx="4.5" fill="#0b6a6a" stroke="#00ffff" stroke-width="1"/>
<rect x="17" y="505.5" width="328" height="4.5" fill="#053c3c" />
</g>
<polygon points="21,502.5 28,502.5 22,508" fill="#8a8a8a" opacity="0.85"/>
<circle cx="19" cy="506" r="4.1" fill="#000"/>
<circle cx="19" cy="506" r="2.2" fill="#ffffc0"/>
<circle cx="343" cy="506" r="4.1" fill="#000"/>
<circle cx="343" cy="506" r="3" fill="#0a4a4a"/>
<path d="M343,506 L343.3,503 L340,505.7 Z M343,506 L342.7,509 L346,506.3 Z" fill="#00ffff"/>
<polygon points="129.6,532 335,532 338,536 338,540 333,545 125.6,545 124.6,537" fill="url(#hatch)" />
<g >
<rect x="123.1" y="537.5" width="210.4" height="9" rx="4.5" fill="#0b6a6a" stroke="#00ffff" stroke-width="1"/>
<rect x="125.6" y="541.5" width="205.4" height="4.5" fill="#053c3c" />
</g>
<polygon points="129.6,538.5 136.6,538.5 130.6,544" fill="#8a8a8a" opacity="0.85"/>
<circle cx="127.6" cy="542" r="4.1" fill="#000"/>
<circle cx="127.6" cy="542" r="2.2" fill="#ffffc0"/>
<circle cx="329" cy="542" r="4.1" fill="#000"/>
<circle cx="329" cy="542" r="3" fill="#0a4a4a"/>
<path d="M329,542 L329.3,539 L326,541.7 Z M329,542 L328.7,545 L332,542.3 Z" fill="#00ffff"/>
<polygon points="407,524 505,524 508,528 508,532 503,537 403,537 402,529" fill="url(#hatch)" />
<g >
<rect x="400.5" y="529.5" width="103" height="9" rx="4.5" fill="#0b6a6a" stroke="#00ffff" stroke-width="1"/>
<rect x="403" y="533.5" width="98" height="4.5" fill="#053c3c" />
</g>
<polygon points="407,530.5 414,530.5 408,536" fill="#8a8a8a" opacity="0.85"/>
<circle cx="405" cy="534" r="4.1" fill="#000"/>
<circle cx="405" cy="534" r="2.2" fill="#ffffc0"/>
<circle cx="499" cy="534" r="4.1" fill="#000"/>
<circle cx="499" cy="534" r="2.2" fill="#ffffc0"/>
<clipPath id="cl512_524"><rect x="510" y="522" width="122.20000000000005" height="20"/></clipPath>
<clipPath id="cr512_524"><rect x="632.2" y="522" width="113.79999999999995" height="20"/></clipPath>
<polygon points="519,524 739,524 742,528 742,532 737,537 515,537 514,529" fill="url(#hatch)" clip-path="url(#cl512_524)"/>
<polygon points="519,524 739,524 742,528 742,532 737,537 515,537 514,529" fill="url(#ghatch)" clip-path="url(#cr512_524)"/>
<g clip-path="url(#cl512_524)">
<rect x="512.5" y="529.5" width="225" height="9" rx="4.5" fill="#0b6a6a" stroke="#00ffff" stroke-width="1"/>
<rect x="515" y="533.5" width="220" height="4.5" fill="#053c3c" />
</g>
<g clip-path="url(#cr512_524)">
<rect x="512.5" y="529.5" width="225" height="9" rx="4.5" fill="#0b6a6a" stroke="#00ff00" stroke-width="1"/>
<rect x="515" y="533.5" width="220" height="4.5" fill="#007800" />
</g>
<polygon points="519,530.5 526,530.5 520,536" fill="#8a8a8a" opacity="0.85"/>
<circle cx="517" cy="534" r="4.1" fill="#000"/>
<circle cx="517" cy="534" r="2.2" fill="#ffffc0"/>
<circle cx="733" cy="534" r="4.1" fill="#000"/>
<circle cx="733" cy="534" r="2.2" fill="#ffffc0"/>
<polygon points="407,576 610,576 613,580 613,584 608,589 403,589 402,581" fill="url(#hatch)" />
<g >
<rect x="400.5" y="581.5" width="208" height="9" rx="4.5" fill="#0b6a6a" stroke="#00ffff" stroke-width="1"/>
<rect x="403" y="585.5" width="203" height="4.5" fill="#053c3c" />
</g>
<polygon points="407,582.5 414,582.5 408,588" fill="#8a8a8a" opacity="0.85"/>
<circle cx="405" cy="586" r="4.1" fill="#000"/>
<circle cx="405" cy="586" r="2.2" fill="#ffffc0"/>
<circle cx="604" cy="586" r="4.1" fill="#000"/>
<circle cx="604" cy="586" r="2.2" fill="#ffffc0"/>
<clipPath id="cl618_576"><rect x="616" y="574" width="57.200000000000045" height="20"/></clipPath>
<clipPath id="cr618_576"><rect x="673.2" y="574" width="53.799999999999955" height="20"/></clipPath>
<polygon points="625,576 720,576 723,580 723,584 718,589 621,589 620,581" fill="url(#hatch)" clip-path="url(#cl618_576)"/>
<polygon points="625,576 720,576 723,580 723,584 718,589 621,589 620,581" fill="url(#ghatch)" clip-path="url(#cr618_576)"/>
<g clip-path="url(#cl618_576)">
<rect x="618.5" y="581.5" width="100" height="9" rx="4.5" fill="#0b6a6a" stroke="#00ffff" stroke-width="1"/>
<rect x="621" y="585.5" width="95" height="4.5" fill="#053c3c" />
</g>
<g clip-path="url(#cr618_576)">
<rect x="618.5" y="581.5" width="100" height="9" rx="4.5" fill="#0b6a6a" stroke="#00ff00" stroke-width="1"/>
<rect x="621" y="585.5" width="95" height="4.5" fill="#007800" />
</g>
<polygon points="625,582.5 632,582.5 626,588" fill="#8a8a8a" opacity="0.85"/>
<circle cx="623" cy="586" r="4.1" fill="#000"/>
<circle cx="623" cy="586" r="2.2" fill="#ffffc0"/>
<circle cx="714" cy="586" r="4.1" fill="#000"/>
<circle cx="714" cy="586" r="2.2" fill="#ffffc0"/>
<rect x="488.5" y="226.5" width="227" height="10" fill="#00ffff" stroke="#000" stroke-width="1" />
<line x1="492" y1="231.5" x2="714" y2="231.5" stroke="#7a8a8a" stroke-width="1"/>
<line x1="501.5" y1="228" x2="501.5" y2="235" stroke="#7a8a8a" stroke-width="1"/>
<line x1="508.5" y1="228" x2="508.5" y2="235" stroke="#7a8a8a" stroke-width="1"/>
<line x1="515.5" y1="228" x2="515.5" y2="235" stroke="#7a8a8a" stroke-width="1"/>
<line x1="522.5" y1="228" x2="522.5" y2="235" stroke="#7a8a8a" stroke-width="1"/>
<line x1="529.5" y1="228" x2="529.5" y2="235" stroke="#7a8a8a" stroke-width="1"/>
<line x1="536.5" y1="228" x2="536.5" y2="235" stroke="#7a8a8a" stroke-width="1"/>
<line x1="543.5" y1="228" x2="543.5" y2="235" stroke="#7a8a8a" stroke-width="1"/>
<line x1="550.5" y1="228" x2="550.5" y2="235" stroke="#7a8a8a" stroke-width="1"/>
<line x1="557.5" y1="228" x2="557.5" y2="235" stroke="#7a8a8a" stroke-width="1"/>
<line x1="564.5" y1="228" x2="564.5" y2="235" stroke="#7a8a8a" stroke-width="1"/>
<line x1="571.5" y1="228" x2="571.5" y2="235" stroke="#7a8a8a" stroke-width="1"/>
<line x1="578.5" y1="228" x2="578.5" y2="235" stroke="#7a8a8a" stroke-width="1"/>
<line x1="585.5" y1="228" x2="585.5" y2="235" stroke="#7a8a8a" stroke-width="1"/>
<line x1="592.5" y1="228" x2="592.5" y2="235" stroke="#7a8a8a" stroke-width="1"/>
<line x1="599.5" y1="228" x2="599.5" y2="235" stroke="#7a8a8a" stroke-width="1"/>
<line x1="606.5" y1="228" x2="606.5" y2="235" stroke="#7a8a8a" stroke-width="1"/>
<line x1="613.5" y1="228" x2="613.5" y2="235" stroke="#7a8a8a" stroke-width="1"/>
<line x1="620.5" y1="228" x2="620.5" y2="235" stroke="#7a8a8a" stroke-width="1"/>
<line x1="627.5" y1="228" x2="627.5" y2="235" stroke="#7a8a8a" stroke-width="1"/>
<line x1="634.5" y1="228" x2="634.5" y2="235" stroke="#7a8a8a" stroke-width="1"/>
<line x1="641.5" y1="228" x2="641.5" y2="235" stroke="#7a8a8a" stroke-width="1"/>
<line x1="648.5" y1="228" x2="648.5" y2="235" stroke="#7a8a8a" stroke-width="1"/>
<line x1="655.5" y1="228" x2="655.5" y2="235" stroke="#7a8a8a" stroke-width="1"/>
<line x1="662.5" y1="228" x2="662.5" y2="235" stroke="#7a8a8a" stroke-width="1"/>
<line x1="669.5" y1="228" x2="669.5" y2="235" stroke="#7a8a8a" stroke-width="1"/>
<line x1="676.5" y1="228" x2="676.5" y2="235" stroke="#7a8a8a" stroke-width="1"/>
<line x1="683.5" y1="228" x2="683.5" y2="235" stroke="#7a8a8a" stroke-width="1"/>
<line x1="690.5" y1="228" x2="690.5" y2="235" stroke="#7a8a8a" stroke-width="1"/>
<line x1="697.5" y1="228" x2="697.5" y2="235" stroke="#7a8a8a" stroke-width="1"/>
<line x1="704.5" y1="228" x2="704.5" y2="235" stroke="#7a8a8a" stroke-width="1"/>
<line x1="711.5" y1="228" x2="711.5" y2="235" stroke="#7a8a8a" stroke-width="1"/>
<rect x="484.5" y="224.5" width="4.5" height="14" fill="#00ffff" stroke="#000" stroke-width="1" />
<rect x="715" y="224.5" width="4.5" height="14" fill="#00ffff" stroke="#000" stroke-width="1" />
<polygon points="494.5,228.5 497.5,231.5 494.5,234.5 491.5,231.5" fill="#ffffc0" stroke="#000" stroke-width="0.8" stroke-linejoin="miter" />
<rect x="376.5" y="271.5" width="153" height="10" fill="#00ffff" stroke="#000" stroke-width="1" />
<line x1="380" y1="276.5" x2="528" y2="276.5" stroke="#7a8a8a" stroke-width="1"/>
<line x1="389.5" y1="273" x2="389.5" y2="280" stroke="#7a8a8a" stroke-width="1"/>
<line x1="396.5" y1="273" x2="396.5" y2="280" stroke="#7a8a8a" stroke-width="1"/>
<line x1="403.5" y1="273" x2="403.5" y2="280" stroke="#7a8a8a" stroke-width="1"/>
<line x1="410.5" y1="273" x2="410.5" y2="280" stroke="#7a8a8a" stroke-width="1"/>
<line x1="417.5" y1="273" x2="417.5" y2="280" stroke="#7a8a8a" stroke-width="1"/>
<line x1="424.5" y1="273" x2="424.5" y2="280" stroke="#7a8a8a" stroke-width="1"/>
<line x1="431.5" y1="273" x2="431.5" y2="280" stroke="#7a8a8a" stroke-width="1"/>
<line x1="438.5" y1="273" x2="438.5" y2="280" stroke="#7a8a8a" stroke-width="1"/>
<line x1="445.5" y1="273" x2="445.5" y2="280" stroke="#7a8a8a" stroke-width="1"/>
<line x1="452.5" y1="273" x2="452.5" y2="280" stroke="#7a8a8a" stroke-width="1"/>
<line x1="459.5" y1="273" x2="459.5" y2="280" stroke="#7a8a8a" stroke-width="1"/>
<line x1="466.5" y1="273" x2="466.5" y2="280" stroke="#7a8a8a" stroke-width="1"/>
<line x1="473.5" y1="273" x2="473.5" y2="280" stroke="#7a8a8a" stroke-width="1"/>
<line x1="480.5" y1="273" x2="480.5" y2="280" stroke="#7a8a8a" stroke-width="1"/>
<line x1="487.5" y1="273" x2="487.5" y2="280" stroke="#7a8a8a" stroke-width="1"/>
<line x1="494.5" y1="273" x2="494.5" y2="280" stroke="#7a8a8a" stroke-width="1"/>
<line x1="501.5" y1="273" x2="501.5" y2="280" stroke="#7a8a8a" stroke-width="1"/>
<line x1="508.5" y1="273" x2="508.5" y2="280" stroke="#7a8a8a" stroke-width="1"/>
<line x1="515.5" y1="273" x2="515.5" y2="280" stroke="#7a8a8a" stroke-width="1"/>
<line x1="522.5" y1="273" x2="522.5" y2="280" stroke="#7a8a8a" stroke-width="1"/>
<rect x="372.5" y="269.5" width="4.5" height="14" fill="#00ffff" stroke="#000" stroke-width="1" />
<rect x="529" y="269.5" width="4.5" height="14" fill="#00ffff" stroke="#000" stroke-width="1" />
<polygon points="382.5,273.5 385.5,276.5 382.5,279.5 379.5,276.5" fill="#ffffc0" stroke="#000" stroke-width="0.8" stroke-linejoin="miter" />
<rect x="492.3" y="242.5" width="14" height="20" fill="none" stroke="#ffff00" stroke-width="1" />
<polygon points="496.40000000000003,244.4 502.2,244.4 502.2,254.705 504.3,254.705 499.3,260.6 494.3,254.705 496.40000000000003,254.705" fill="#00a0a0" stroke="#000" stroke-width="1.25" stroke-linejoin="miter" />
<rect x="528.4" y="242.5" width="14" height="20" fill="none" stroke="#ffff00" stroke-width="1" />
<polygon points="532.5,244.4 538.3,244.4 538.3,254.705 540.4,254.705 535.4,260.6 530.4,254.705 532.5,254.705" fill="#00a0a0" stroke="#000" stroke-width="1.25" stroke-linejoin="miter" />
<rect x="558.1" y="242.5" width="14" height="20" fill="none" stroke="#ffff00" stroke-width="1" />
<polygon points="562.2,244.4 568.0,244.4 568.0,254.705 570.1,254.705 565.1,260.6 560.1,254.705 562.2,254.705" fill="#00a0a0" stroke="#000" stroke-width="1.25" stroke-linejoin="miter" />
<rect x="594.3" y="242.5" width="14" height="20" fill="none" stroke="#ffff00" stroke-width="1" />
<polygon points="598.4,244.4 604.1999999999999,244.4 604.1999999999999,254.705 606.3,254.705 601.3,260.6 596.3,254.705 598.4,254.705" fill="#00a0a0" stroke="#000" stroke-width="1.25" stroke-linejoin="miter" />
<rect x="630.2" y="242.5" width="14" height="20" fill="none" stroke="#ffff00" stroke-width="1" />
<polygon points="634.3000000000001,244.4 640.1,244.4 640.1,254.705 642.2,254.705 637.2,260.6 632.2,254.705 634.3000000000001,254.705" fill="#00a0a0" stroke="#000" stroke-width="1.25" stroke-linejoin="miter" />
<rect x="666.3" y="242.5" width="14" height="20" fill="none" stroke="#ffff00" stroke-width="1" />
<polygon points="670.4,244.4 676.1999999999999,244.4 676.1999999999999,254.705 678.3,254.705 673.3,260.6 668.3,254.705 670.4,254.705" fill="#00a0a0" stroke="#000" stroke-width="1.25" stroke-linejoin="miter" />
<rect x="702.0" y="242.5" width="14" height="20" fill="none" stroke="#ffff00" stroke-width="1" />
<polygon points="706.1,244.4 711.9,244.4 711.9,254.705 714.0,254.705 709.0,260.6 704.0,254.705 706.1,254.705" fill="#00a0a0" stroke="#000" stroke-width="1.25" stroke-linejoin="miter" />
<rect x="408.4" y="287.5" width="14" height="20" fill="none" stroke="#ffff00" stroke-width="1" />
<polygon points="412.5,289.4 418.29999999999995,289.4 418.29999999999995,299.705 420.4,299.705 415.4,305.6 410.4,299.705 412.5,299.705" fill="#00a0a0" stroke="#000" stroke-width="1.25" stroke-linejoin="miter" />
<rect x="444.3" y="287.5" width="14" height="20" fill="none" stroke="#ffff00" stroke-width="1" />
<polygon points="448.40000000000003,289.4 454.2,289.4 454.2,299.705 456.3,299.705 451.3,305.6 446.3,299.705 448.40000000000003,299.705" fill="#00a0a0" stroke="#000" stroke-width="1.25" stroke-linejoin="miter" />
<rect x="480.2" y="287.5" width="14" height="20" fill="none" stroke="#ffff00" stroke-width="1" />
<polygon points="484.3,289.4 490.09999999999997,289.4 490.09999999999997,299.705 492.2,299.705 487.2,305.6 482.2,299.705 484.3,299.705" fill="#00a0a0" stroke="#000" stroke-width="1.25" stroke-linejoin="miter" />
<rect x="516.1" y="287.5" width="14" height="20" fill="none" stroke="#ffff00" stroke-width="1" />
<polygon points="520.2,289.4 526.0,289.4 526.0,299.705 528.1,299.705 523.1,305.6 518.1,299.705 520.2,299.705" fill="#00a0a0" stroke="#000" stroke-width="1.25" stroke-linejoin="miter" />
<rect x="22.5" y="453.5" width="12" height="20" fill="none" stroke="#ffff00" stroke-width="1" />
<polygon points="25.6,455.4 31.4,455.4 31.4,465.705 33.4,465.705 28.5,471.6 23.6,465.705 25.6,465.705" fill="#00a0a0" stroke="#000" stroke-width="1.25" stroke-linejoin="miter" />
<rect x="58.5" y="453.5" width="12" height="20" fill="none" stroke="#ffff00" stroke-width="1" />
<polygon points="61.6,455.4 67.4,455.4 67.4,465.705 69.4,465.705 64.5,471.6 59.6,465.705 61.6,465.705" fill="#00a0a0" stroke="#000" stroke-width="1.25" stroke-linejoin="miter" />
<rect x="94.5" y="453.5" width="12" height="20" fill="none" stroke="#ffff00" stroke-width="1" />
<polygon points="97.6,455.4 103.4,455.4 103.4,465.705 105.4,465.705 100.5,471.6 95.6,465.705 97.6,465.705" fill="#00a0a0" stroke="#000" stroke-width="1.25" stroke-linejoin="miter" />
<rect x="123.5" y="453.5" width="12" height="20" fill="none" stroke="#ffff00" stroke-width="1" />
<polygon points="126.6,455.4 132.4,455.4 132.4,465.705 134.4,465.705 129.5,471.6 124.6,465.705 126.6,465.705" fill="#00a0a0" stroke="#000" stroke-width="1.25" stroke-linejoin="miter" />
<rect x="137.5" y="453.5" width="12" height="20" fill="none" stroke="#ffff00" stroke-width="1" />
<polygon points="140.6,455.4 146.4,455.4 146.4,465.705 148.4,465.705 143.5,471.6 138.6,465.705 140.6,465.705" fill="#00a0a0" stroke="#000" stroke-width="1.25" stroke-linejoin="miter" />
<rect x="159.5" y="453.5" width="12" height="20" fill="none" stroke="#ffff00" stroke-width="1" />
<polygon points="162.6,455.4 168.4,455.4 168.4,465.705 170.4,465.705 165.5,471.6 160.6,465.705 162.6,465.705" fill="#00a0a0" stroke="#000" stroke-width="1.25" stroke-linejoin="miter" />
<rect x="173.5" y="453.5" width="12" height="20" fill="none" stroke="#ffff00" stroke-width="1" />
<polygon points="176.6,455.4 182.4,455.4 182.4,465.705 184.4,465.705 179.5,471.6 174.6,465.705 176.6,465.705" fill="#00a0a0" stroke="#000" stroke-width="1.25" stroke-linejoin="miter" />
<rect x="195.5" y="453.5" width="12" height="20" fill="none" stroke="#ffff00" stroke-width="1" />
<polygon points="198.6,455.4 204.4,455.4 204.4,465.705 206.4,465.705 201.5,471.6 196.6,465.705 198.6,465.705" fill="#00a0a0" stroke="#000" stroke-width="1.25" stroke-linejoin="miter" />
<rect x="209.5" y="453.5" width="12" height="20" fill="none" stroke="#ffff00" stroke-width="1" />
<polygon points="212.6,455.4 218.4,455.4 218.4,465.705 220.4,465.705 215.5,471.6 210.6,465.705 212.6,465.705" fill="#00a0a0" stroke="#000" stroke-width="1.25" stroke-linejoin="miter" />
<rect x="231.5" y="453.5" width="12" height="20" fill="none" stroke="#ffff00" stroke-width="1" />
<polygon points="234.6,455.4 240.4,455.4 240.4,465.705 242.4,465.705 237.5,471.6 232.6,465.705 234.6,465.705" fill="#00a0a0" stroke="#000" stroke-width="1.25" stroke-linejoin="miter" />
<rect x="245.5" y="453.5" width="12" height="20" fill="none" stroke="#ffff00" stroke-width="1" />
<polygon points="248.6,455.4 254.4,455.4 254.4,465.705 256.4,465.705 251.5,471.6 246.6,465.705 248.6,465.705" fill="#00a0a0" stroke="#000" stroke-width="1.25" stroke-linejoin="miter" />
<rect x="267.5" y="453.5" width="12" height="20" fill="none" stroke="#ffff00" stroke-width="1" />
<polygon points="270.6,455.4 276.4,455.4 276.4,465.705 278.4,465.705 273.5,471.6 268.6,465.705 270.6,465.705" fill="#00a0a0" stroke="#000" stroke-width="1.25" stroke-linejoin="miter" />
<rect x="281.5" y="453.5" width="12" height="20" fill="none" stroke="#ffff00" stroke-width="1" />
<polygon points="284.6,455.4 290.4,455.4 290.4,465.705 292.4,465.705 287.5,471.6 282.6,465.705 284.6,465.705" fill="#00a0a0" stroke="#000" stroke-width="1.25" stroke-linejoin="miter" />
<rect x="303.5" y="453.5" width="12" height="20" fill="none" stroke="#ffff00" stroke-width="1" />
<polygon points="306.6,455.4 312.4,455.4 312.4,465.705 314.4,465.705 309.5,471.6 304.6,465.705 306.6,465.705" fill="#00a0a0" stroke="#000" stroke-width="1.25" stroke-linejoin="miter" />
<rect x="317.5" y="453.5" width="12" height="20" fill="none" stroke="#ffff00" stroke-width="1" />
<polygon points="320.6,455.4 326.4,455.4 326.4,465.705 328.4,465.705 323.5,471.6 318.6,465.705 320.6,465.705" fill="#00a0a0" stroke="#000" stroke-width="1.25" stroke-linejoin="miter" />
<polygon points="794.9,151.4 800.6999999999999,151.4 800.6999999999999,161.1 802.8,161.1 797.8,166.6 792.8,161.1 794.9,161.1" fill="#00a0a0" stroke="#000" stroke-width="1.25" stroke-linejoin="miter" />
<polygon points="807.9,151.4 813.6999999999999,151.4 813.6999999999999,161.1 815.8,161.1 810.8,166.6 805.8,161.1 807.9,161.1" fill="#00a0a0" stroke="#000" stroke-width="1.25" stroke-linejoin="miter" />
<polygon points="820.9,151.4 826.6999999999999,151.4 826.6999999999999,161.1 828.8,161.1 823.8,166.6 818.8,161.1 820.9,161.1" fill="#00a0a0" stroke="#000" stroke-width="1.25" stroke-linejoin="miter" />
<rect x="791.5" y="149.5" width="38" height="19" fill="none" stroke="#ffff00" stroke-width="1" />
<rect x="803.5" y="149.5" width="1.6" height="19" fill="#ffff00" />
<rect x="816.5" y="149.5" width="1.6" height="19" fill="#ffff00" />
<polygon points="878.9,151.4 884.6999999999999,151.4 884.6999999999999,161.1 886.8,161.1 881.8,166.6 876.8,161.1 878.9,161.1" fill="#00a0a0" stroke="#000" stroke-width="1.25" stroke-linejoin="miter" />
<polygon points="891.9,151.4 897.6999999999999,151.4 897.6999999999999,161.1 899.8,161.1 894.8,166.6 889.8,161.1 891.9,161.1" fill="#00a0a0" stroke="#000" stroke-width="1.25" stroke-linejoin="miter" />
<polygon points="904.9,151.4 910.6999999999999,151.4 910.6999999999999,161.1 912.8,161.1 907.8,166.6 902.8,161.1 904.9,161.1" fill="#00a0a0" stroke="#000" stroke-width="1.25" stroke-linejoin="miter" />
<rect x="875.5" y="149.5" width="38" height="19" fill="none" stroke="#ffff00" stroke-width="1" />
<rect x="887.5" y="149.5" width="1.6" height="19" fill="#ffff00" />
<rect x="900.5" y="149.5" width="1.6" height="19" fill="#ffff00" />
<polygon points="962.9,151.4 968.6999999999999,151.4 968.6999999999999,161.1 970.8,161.1 965.8,166.6 960.8,161.1 962.9,161.1" fill="#58f000" stroke="#000" stroke-width="1.25" stroke-linejoin="miter" />
<polygon points="975.9,151.4 981.6999999999999,151.4 981.6999999999999,161.1 983.8,161.1 978.8,166.6 973.8,161.1 975.9,161.1" fill="#58f000" stroke="#000" stroke-width="1.25" stroke-linejoin="miter" />
<polygon points="988.9,151.4 994.6999999999999,151.4 994.6999999999999,161.1 996.8,161.1 991.8,166.6 986.8,161.1 988.9,161.1" fill="#58f000" stroke="#000" stroke-width="1.25" stroke-linejoin="miter" />
<rect x="959.5" y="149.5" width="38" height="19" fill="none" stroke="#ffff00" stroke-width="1" />
<rect x="971.5" y="149.5" width="1.6" height="19" fill="#ffff00" />
<rect x="984.5" y="149.5" width="1.6" height="19" fill="#ffff00" />
<rect x="402.75" y="478.75" width="26.5" height="9.5" fill="#00ffff" stroke="#000" stroke-width="1.5" />
<rect x="408" y="480" width="17" height="1" fill="#0a6a6a"/>
<rect x="410" y="482" width="13" height="1" fill="#0a6a6a"/>
<rect x="412" y="484" width="8" height="1" fill="#0a6a6a"/>
<rect x="414" y="486" width="4" height="1" fill="#0a6a6a"/>
<rect x="408.5" y="490.5" width="16" height="16" fill="none" stroke="#ffff00" stroke-width="1" />
<polygon points="415.2,492.2 418,492.2 418,498 413.7,498 413.7,501 415,501 412.5,503.7 410.1,501 411.4,501 411.4,495.3 415.2,495.3" fill="#fff" />
<rect x="438.75" y="478.75" width="26.5" height="9.5" fill="#00ffff" stroke="#000" stroke-width="1.5" />
<rect x="444" y="480" width="17" height="1" fill="#0a6a6a"/>
<rect x="446" y="482" width="13" height="1" fill="#0a6a6a"/>
<rect x="448" y="484" width="8" height="1" fill="#0a6a6a"/>
<rect x="450" y="486" width="4" height="1" fill="#0a6a6a"/>
<rect x="444.5" y="490.5" width="16" height="16" fill="none" stroke="#ffff00" stroke-width="1" />
<polygon points="451.2,492.2 454,492.2 454,498 449.7,498 449.7,501 451,501 448.5,503.7 446.1,501 447.4,501 447.4,495.3 451.2,495.3" fill="#fff" />
<rect x="474.75" y="478.75" width="26.5" height="9.5" fill="#00ffff" stroke="#000" stroke-width="1.5" />
<rect x="480" y="480" width="17" height="1" fill="#0a6a6a"/>
<rect x="482" y="482" width="13" height="1" fill="#0a6a6a"/>
<rect x="484" y="484" width="8" height="1" fill="#0a6a6a"/>
<rect x="486" y="486" width="4" height="1" fill="#0a6a6a"/>
<rect x="480.5" y="490.5" width="16" height="16" fill="none" stroke="#ffff00" stroke-width="1" />
<polygon points="487.2,492.2 490,492.2 490,498 485.7,498 485.7,501 487,501 484.5,503.7 482.1,501 483.4,501 483.4,495.3 487.2,495.3" fill="#fff" />
<rect x="510.75" y="478.75" width="26.5" height="9.5" fill="#00ff00" stroke="#000" stroke-width="1.5" />
<rect x="516" y="480" width="17" height="1" fill="#0a6a6a"/>
<rect x="518" y="482" width="13" height="1" fill="#0a6a6a"/>
<rect x="520" y="484" width="8" height="1" fill="#0a6a6a"/>
<rect x="522" y="486" width="4" height="1" fill="#0a6a6a"/>
<rect x="516.5" y="490.5" width="16" height="16" fill="none" stroke="#ffff00" stroke-width="1" />
<polygon points="523.2,492.2 526,492.2 526,498 521.7,498 521.7,501 523,501 520.5,503.7 518.1,501 519.4,501 519.4,495.3 523.2,495.3" fill="#fff" />
<rect x="546.75" y="478.75" width="26.5" height="9.5" fill="#00ff00" stroke="#000" stroke-width="1.5" />
<rect x="552" y="480" width="17" height="1" fill="#0a6a6a"/>
<rect x="554" y="482" width="13" height="1" fill="#0a6a6a"/>
<rect x="556" y="484" width="8" height="1" fill="#0a6a6a"/>
<rect x="558" y="486" width="4" height="1" fill="#0a6a6a"/>
<rect x="552.5" y="490.5" width="16" height="16" fill="none" stroke="#ffff00" stroke-width="1" />
<polygon points="559.2,492.2 562,492.2 562,498 557.7,498 557.7,501 559,501 556.5,503.7 554.1,501 555.4,501 555.4,495.3 559.2,495.3" fill="#fff" />
<rect x="582.75" y="478.75" width="26.5" height="9.5" fill="#00ff00" stroke="#000" stroke-width="1.5" />
<rect x="588" y="480" width="17" height="1" fill="#0a6a6a"/>
<rect x="590" y="482" width="13" height="1" fill="#0a6a6a"/>
<rect x="592" y="484" width="8" height="1" fill="#0a6a6a"/>
<rect x="594" y="486" width="4" height="1" fill="#0a6a6a"/>
<rect x="588.5" y="490.5" width="16" height="16" fill="none" stroke="#ffff00" stroke-width="1" />
<polygon points="595.2,492.2 598,492.2 598,498 593.7,498 593.7,501 595,501 592.5,503.7 590.1,501 591.4,501 591.4,495.3 595.2,495.3" fill="#fff" />
<rect x="618.75" y="478.75" width="26.5" height="9.5" fill="#00ff00" stroke="#000" stroke-width="1.5" />
<rect x="624" y="480" width="17" height="1" fill="#0a6a6a"/>
<rect x="626" y="482" width="13" height="1" fill="#0a6a6a"/>
<rect x="628" y="484" width="8" height="1" fill="#0a6a6a"/>
<rect x="630" y="486" width="4" height="1" fill="#0a6a6a"/>
<rect x="624.5" y="490.5" width="16" height="16" fill="none" stroke="#ffff00" stroke-width="1" />
<polygon points="633.8,492.2 631,492.2 631,498 635.3,498 635.3,501 634,501 636.5,503.7 638.9,501 637.6,501 637.6,495.3 633.8,495.3" fill="#fff" />
<rect x="654.75" y="478.75" width="26.5" height="9.5" fill="#00ff00" stroke="#000" stroke-width="1.5" />
<rect x="660" y="480" width="17" height="1" fill="#0a6a6a"/>
<rect x="662" y="482" width="13" height="1" fill="#0a6a6a"/>
<rect x="664" y="484" width="8" height="1" fill="#0a6a6a"/>
<rect x="666" y="486" width="4" height="1" fill="#0a6a6a"/>
<rect x="660.5" y="490.5" width="16" height="16" fill="none" stroke="#ffff00" stroke-width="1" />
<polygon points="669.8,492.2 667,492.2 667,498 671.3,498 671.3,501 670,501 672.5,503.7 674.9,501 673.6,501 673.6,495.3 669.8,495.3" fill="#fff" />
<rect x="690.75" y="478.75" width="26.5" height="9.5" fill="#00ff00" stroke="#000" stroke-width="1.5" />
<rect x="696" y="480" width="17" height="1" fill="#0a6a6a"/>
<rect x="698" y="482" width="13" height="1" fill="#0a6a6a"/>
<rect x="700" y="484" width="8" height="1" fill="#0a6a6a"/>
<rect x="702" y="486" width="4" height="1" fill="#0a6a6a"/>
<rect x="696.5" y="490.5" width="16" height="16" fill="none" stroke="#ffff00" stroke-width="1" />
<polygon points="705.8,492.2 703,492.2 703,498 707.3,498 707.3,501 706,501 708.5,503.7 710.9,501 709.6,501 709.6,495.3 705.8,495.3" fill="#fff" />
<polygon points="286,109.9 291.9,104 301.4,104 307.4,109.9 307.4,115.4 312.5,122.6 307.4,122.6 307.4,128.5 299.1,128.5 299.1,123.4 293.9,123.4 293.9,128.5 286,128.5" fill="#00ffff" stroke="#000" stroke-width="1.2" stroke-linejoin="miter" />
<path d="M292.5,129.5 V153.5 H290.5 M301.5,129.5 V153.5 H303.5 M301.5,129.5 H303.5 M292.5,130.0 L288.0,132.5 L290.0,137.5 H292.5 M301.5,130.5 H303.5 L306.3,135.0 L302.5,137.5 H301.5 M292.5,142.0 L288.0,144.5 L290.0,149.5 H292.5 M301.5,142.5 H303.5 L306.3,147.0 L302.5,149.5 H301.5" fill="none" stroke="#00ffff" stroke-width="1" stroke-linejoin="miter"/>
<rect x="291.0" y="130.5" width="1" height="1" fill="#c06060"/>
<rect x="302.0" y="136.5" width="1" height="1" fill="#c06060"/>
<rect x="291.0" y="142.5" width="1" height="1" fill="#c06060"/>
<rect x="302.0" y="148.5" width="1" height="1" fill="#c06060"/>
<polygon points="365,109.9 370.9,104 380.4,104 386.4,109.9 386.4,115.4 391.5,122.6 386.4,122.6 386.4,128.5 378.1,128.5 378.1,123.4 372.9,123.4 372.9,128.5 365,128.5" fill="#00ffff" stroke="#000" stroke-width="1.2" stroke-linejoin="miter" />
<path d="M371.5,129.5 V153.5 H369.5 M380.5,129.5 V153.5 H382.5 M380.5,129.5 H382.5 M371.5,130.0 L367.0,132.5 L369.0,137.5 H371.5 M380.5,130.5 H382.5 L385.3,135.0 L381.5,137.5 H380.5 M371.5,142.0 L367.0,144.5 L369.0,149.5 H371.5 M380.5,142.5 H382.5 L385.3,147.0 L381.5,149.5 H380.5" fill="none" stroke="#00ffff" stroke-width="1" stroke-linejoin="miter"/>
<rect x="370.0" y="130.5" width="1" height="1" fill="#c06060"/>
<rect x="381.0" y="136.5" width="1" height="1" fill="#c06060"/>
<rect x="370.0" y="142.5" width="1" height="1" fill="#c06060"/>
<rect x="381.0" y="148.5" width="1" height="1" fill="#c06060"/>
<polygon points="763.3,124.9 769.1999999999999,119 778.6999999999999,119 784.6999999999999,124.9 784.6999999999999,130.4 789.8,137.6 784.6999999999999,137.6 784.6999999999999,143.5 776.4,143.5 776.4,138.4 771.1999999999999,138.4 771.1999999999999,143.5 763.3,143.5" fill="#00ffff" stroke="#000" stroke-width="1.2" stroke-linejoin="miter" />
<path d="M769.5,144.5 V168.5 H767.5 M778.5,144.5 V168.5 H780.5 M778.5,144.5 H780.5 M769.5,145.0 L765.0,147.5 L767.0,152.5 H769.5 M778.5,145.5 H780.5 L783.3,150.0 L779.5,152.5 H778.5 M769.5,157.0 L765.0,159.5 L767.0,164.5 H769.5 M778.5,157.5 H780.5 L783.3,162.0 L779.5,164.5 H778.5" fill="none" stroke="#00ffff" stroke-width="1" stroke-linejoin="miter"/>
<rect x="768.0" y="145.5" width="1" height="1" fill="#c06060"/>
<rect x="779.0" y="151.5" width="1" height="1" fill="#c06060"/>
<rect x="768.0" y="157.5" width="1" height="1" fill="#c06060"/>
<rect x="779.0" y="163.5" width="1" height="1" fill="#c06060"/>
<polygon points="847,124.9 852.9,119 862.4,119 868.4,124.9 868.4,130.4 873.5,137.6 868.4,137.6 868.4,143.5 860.1,143.5 860.1,138.4 854.9,138.4 854.9,143.5 847,143.5" fill="#00ffff" stroke="#000" stroke-width="1.2" stroke-linejoin="miter" />
<path d="M853.5,144.5 V168.5 H851.5 M862.5,144.5 V168.5 H864.5 M862.5,144.5 H864.5 M853.5,145.0 L849.0,147.5 L851.0,152.5 H853.5 M862.5,145.5 H864.5 L867.3,150.0 L863.5,152.5 H862.5 M853.5,157.0 L849.0,159.5 L851.0,164.5 H853.5 M862.5,157.5 H864.5 L867.3,162.0 L863.5,164.5 H862.5" fill="none" stroke="#00ffff" stroke-width="1" stroke-linejoin="miter"/>
<rect x="852.0" y="145.5" width="1" height="1" fill="#c06060"/>
<rect x="863.0" y="151.5" width="1" height="1" fill="#c06060"/>
<rect x="852.0" y="157.5" width="1" height="1" fill="#c06060"/>
<rect x="863.0" y="163.5" width="1" height="1" fill="#c06060"/>
<polygon points="931,124.9 936.9,119 946.4,119 952.4,124.9 952.4,130.4 957.5,137.6 952.4,137.6 952.4,143.5 944.1,143.5 944.1,138.4 938.9,138.4 938.9,143.5 931,143.5" fill="#00ff00" stroke="#000" stroke-width="1.2" stroke-linejoin="miter" />
<path d="M937.5,144.5 V168.5 H935.5 M946.5,144.5 V168.5 H948.5 M946.5,144.5 H948.5 M937.5,145.0 L933.0,147.5 L935.0,152.5 H937.5 M946.5,145.5 H948.5 L951.3,150.0 L947.5,152.5 H946.5 M937.5,157.0 L933.0,159.5 L935.0,164.5 H937.5 M946.5,157.5 H948.5 L951.3,162.0 L947.5,164.5 H946.5" fill="none" stroke="#00ff00" stroke-width="1" stroke-linejoin="miter"/>
<rect x="936.0" y="145.5" width="1" height="1" fill="#c06060"/>
<rect x="947.0" y="151.5" width="1" height="1" fill="#c06060"/>
<rect x="936.0" y="157.5" width="1" height="1" fill="#c06060"/>
<rect x="947.0" y="163.5" width="1" height="1" fill="#c06060"/>
<polygon points="1005,98.3 1015,98.3 1018.6,102.8 1018.6,113 1021.6,116.5 1021.6,118.6 1014.5,118.6 1012,122.6 1009.3,120 1009.3,118.6 998.3,118.6 998.3,116.5 1001.5,113 1001.5,102.8" fill="#00ffff" />
<path d="M998.3,117 L1001.5,113 V102.8 L1005,98.3 H1015" stroke="#000" fill="none" stroke-width="1"/>
<path d="M1015,98.3 L1018.6,102.8 V113 L1021.6,116.5 V118.6 H1014.5 L1012,122.6" stroke="#fff" fill="none" stroke-width="1"/>
<path d="M998.3,118.6 H1009.3 V120 L1012,122.6" stroke="#fff" fill="none" stroke-width="1"/>
<path d="M1009.3,118.6 V120.5 L1011.5,122.6" stroke="#000" fill="none" stroke-width="1"/>
<polygon points="286,627.5 293.8,627.5 293.8,632.2 299.1,632.2 299.1,627.5 307,627.5 307,632 312.3,632 307.4,639.3 307.4,646.9 301.1,651.6 292,651.6 286,646" fill="#00ffff" stroke="#000" stroke-width="1.3" stroke-linejoin="miter" />
<rect x="294.5" y="635.6" width="6" height="3.8" fill="#fff8c0" stroke="#000" stroke-width="1" />
<circle cx="297.5" cy="645.3" r="3" fill="#fff8c0" stroke="#000" stroke-width="1"/>
<path d="M292.5,602.5 V627.5 H290.5 M301.5,602.5 V627.5 H303.5 M301.5,602.5 H303.5 M292.5,605.5 L288.0,608.0 L290.0,613.0 H292.5 M301.5,606.0 H303.5 L306.3,610.5 L302.5,613.0 H301.5 M292.5,617.5 L288.0,620.0 L290.0,625.0 H292.5 M301.5,618.0 H303.5 L306.3,622.5 L302.5,625.0 H301.5" fill="none" stroke="#00ffff" stroke-width="1" stroke-linejoin="miter"/>
<rect x="291.0" y="606.0" width="1" height="1" fill="#c06060"/>
<rect x="302.0" y="612.0" width="1" height="1" fill="#c06060"/>
<rect x="291.0" y="618.0" width="1" height="1" fill="#c06060"/>
<rect x="302.0" y="624.0" width="1" height="1" fill="#c06060"/>
<polygon points="386.6,627.5 378.8,627.5 378.8,632.2 373.5,632.2 373.5,627.5 365.6,627.5 365.6,632 360.3,632 365.2,639.3 365.2,646.9 371.5,651.6 380.6,651.6 386.6,646" fill="#00ffff" stroke="#000" stroke-width="1.3" stroke-linejoin="miter" />
<rect x="373.3" y="635.6" width="6" height="3.8" fill="#fff8c0" stroke="#000" stroke-width="1" />
<circle cx="376.3" cy="645.3" r="3" fill="#fff8c0" stroke="#000" stroke-width="1"/>
<path d="M371.5,602.5 V627.5 H369.5 M380.5,602.5 V627.5 H382.5 M380.5,602.5 H382.5 M371.5,605.5 L367.0,608.0 L369.0,613.0 H371.5 M380.5,606.0 H382.5 L385.3,610.5 L381.5,613.0 H380.5 M371.5,617.5 L367.0,620.0 L369.0,625.0 H371.5 M380.5,618.0 H382.5 L385.3,622.5 L381.5,625.0 H380.5" fill="none" stroke="#00ffff" stroke-width="1" stroke-linejoin="miter"/>
<rect x="370.0" y="606.0" width="1" height="1" fill="#c06060"/>
<rect x="381.0" y="612.0" width="1" height="1" fill="#c06060"/>
<rect x="370.0" y="618.0" width="1" height="1" fill="#c06060"/>
<rect x="381.0" y="624.0" width="1" height="1" fill="#c06060"/>
<polygon points="784.8,687.5 777.0,687.5 777.0,692.2 771.7,692.2 771.7,687.5 763.8,687.5 763.8,692 758.5,692 763.4,699.3 763.4,706.9 769.7,711.6 778.8,711.6 784.8,706" fill="#00ffff" stroke="#000" stroke-width="1.3" stroke-linejoin="miter" />
<rect x="771.5" y="695.6" width="6" height="3.8" fill="#fff8c0" stroke="#000" stroke-width="1" />
<circle cx="774.5" cy="705.3" r="3" fill="#fff8c0" stroke="#000" stroke-width="1"/>
<path d="M769.5,662.5 V687.5 H767.5 M778.5,662.5 V687.5 H780.5 M778.5,662.5 H780.5 M769.5,665.5 L765.0,668.0 L767.0,673.0 H769.5 M778.5,666.0 H780.5 L783.3,670.5 L779.5,673.0 H778.5 M769.5,677.5 L765.0,680.0 L767.0,685.0 H769.5 M778.5,678.0 H780.5 L783.3,682.5 L779.5,685.0 H778.5" fill="none" stroke="#00ffff" stroke-width="1" stroke-linejoin="miter"/>
<rect x="768.0" y="666.0" width="1" height="1" fill="#c06060"/>
<rect x="779.0" y="672.0" width="1" height="1" fill="#c06060"/>
<rect x="768.0" y="678.0" width="1" height="1" fill="#c06060"/>
<rect x="779.0" y="684.0" width="1" height="1" fill="#c06060"/>
<polygon points="868.8,687.5 861.0,687.5 861.0,692.2 855.7,692.2 855.7,687.5 847.8,687.5 847.8,692 842.5,692 847.4,699.3 847.4,706.9 853.7,711.6 862.8,711.6 868.8,706" fill="#00ffff" stroke="#000" stroke-width="1.3" stroke-linejoin="miter" />
<rect x="855.5" y="695.6" width="6" height="3.8" fill="#fff8c0" stroke="#000" stroke-width="1" />
<circle cx="858.5" cy="705.3" r="3" fill="#fff8c0" stroke="#000" stroke-width="1"/>
<path d="M853.5,662.5 V687.5 H851.5 M862.5,662.5 V687.5 H864.5 M862.5,662.5 H864.5 M853.5,665.5 L849.0,668.0 L851.0,673.0 H853.5 M862.5,666.0 H864.5 L867.3,670.5 L863.5,673.0 H862.5 M853.5,677.5 L849.0,680.0 L851.0,685.0 H853.5 M862.5,678.0 H864.5 L867.3,682.5 L863.5,685.0 H862.5" fill="none" stroke="#00ffff" stroke-width="1" stroke-linejoin="miter"/>
<rect x="852.0" y="666.0" width="1" height="1" fill="#c06060"/>
<rect x="863.0" y="672.0" width="1" height="1" fill="#c06060"/>
<rect x="852.0" y="678.0" width="1" height="1" fill="#c06060"/>
<rect x="863.0" y="684.0" width="1" height="1" fill="#c06060"/>
<polygon points="952.5999999999999,687.5 944.8,687.5 944.8,692.2 939.5,692.2 939.5,687.5 931.5999999999999,687.5 931.5999999999999,692 926.3,692 931.1999999999999,699.3 931.1999999999999,706.9 937.5,711.6 946.5999999999999,711.6 952.5999999999999,706" fill="#00ff00" stroke="#000" stroke-width="1.3" stroke-linejoin="miter" />
<rect x="939.3" y="695.6" width="6" height="3.8" fill="#fff8c0" stroke="#000" stroke-width="1" />
<circle cx="942.3" cy="705.3" r="3" fill="#fff8c0" stroke="#000" stroke-width="1"/>
<path d="M937.5,662.5 V687.5 H935.5 M946.5,662.5 V687.5 H948.5 M946.5,662.5 H948.5 M937.5,665.5 L933.0,668.0 L935.0,673.0 H937.5 M946.5,666.0 H948.5 L951.3,670.5 L947.5,673.0 H946.5 M937.5,677.5 L933.0,680.0 L935.0,685.0 H937.5 M946.5,678.0 H948.5 L951.3,682.5 L947.5,685.0 H946.5" fill="none" stroke="#00ff00" stroke-width="1" stroke-linejoin="miter"/>
<rect x="936.0" y="666.0" width="1" height="1" fill="#c06060"/>
<rect x="947.0" y="672.0" width="1" height="1" fill="#c06060"/>
<rect x="936.0" y="678.0" width="1" height="1" fill="#c06060"/>
<rect x="947.0" y="684.0" width="1" height="1" fill="#c06060"/>
<path d="M497.40000000000003,620.9 V617.9 A2.75,2.75 0 0 1 502.90000000000003,617.9 V620.9 Z" fill="#00ffff" stroke="#000" stroke-width="1" />
<rect x="502.6" y="640.6999999999999" width="4" height="2.5" fill="#00ffff" stroke="#000" stroke-width="0.8" />
<rect x="501.1" y="642.9999999999999" width="7" height="2.2" fill="#00ffff" stroke="#000" stroke-width="0.8" />
<rect x="518.9" y="640.6999999999999" width="4" height="2.5" fill="#00ffff" stroke="#000" stroke-width="0.8" />
<rect x="517.4" y="642.9999999999999" width="7" height="2.2" fill="#00ffff" stroke="#000" stroke-width="0.8" />
<rect x="495.1" y="620.4" width="35.6" height="20.3" fill="#00ffff" stroke="#000" stroke-width="1.3" />
<polygon points="530.7,631.9 540.7,636.4 540.7,645.4 530.7,640.4" fill="#00ffff" stroke="#000" stroke-width="1.2" stroke-linejoin="miter" />
<path d="M602.5999999999999,622.8 V619.8 A2.75,2.75 0 0 1 608.0999999999999,619.8 V622.8 Z" fill="#00ffff" stroke="#000" stroke-width="1" />
<rect x="607.8" y="642.5999999999999" width="4" height="2.5" fill="#00ffff" stroke="#000" stroke-width="0.8" />
<rect x="606.3" y="644.8999999999999" width="7" height="2.2" fill="#00ffff" stroke="#000" stroke-width="0.8" />
<rect x="624.0999999999999" y="642.5999999999999" width="4" height="2.5" fill="#00ffff" stroke="#000" stroke-width="0.8" />
<rect x="622.5999999999999" y="644.8999999999999" width="7" height="2.2" fill="#00ffff" stroke="#000" stroke-width="0.8" />
<rect x="600.3" y="622.3" width="35.6" height="20.3" fill="#00ffff" stroke="#000" stroke-width="1.3" />
<polygon points="635.9,633.8 645.9,638.3 645.9,647.3 635.9,642.3" fill="#00ffff" stroke="#000" stroke-width="1.2" stroke-linejoin="miter" />
<path d="M712.4,619.0 V616.0 A2.75,2.75 0 0 1 717.9,616.0 V619.0 Z" fill="#00ff00" stroke="#000" stroke-width="1" />
<rect x="717.6" y="638.8" width="4" height="2.5" fill="#00ff00" stroke="#000" stroke-width="0.8" />
<rect x="716.1" y="641.0999999999999" width="7" height="2.2" fill="#00ff00" stroke="#000" stroke-width="0.8" />
<rect x="733.9" y="638.8" width="4" height="2.5" fill="#00ff00" stroke="#000" stroke-width="0.8" />
<rect x="732.4" y="641.0999999999999" width="7" height="2.2" fill="#00ff00" stroke="#000" stroke-width="0.8" />
<rect x="710.1" y="618.5" width="35.6" height="20.3" fill="#00ff00" stroke="#000" stroke-width="1.3" />
<polygon points="745.7,630.0 755.7,634.5 755.7,643.5 745.7,638.5" fill="#00ff00" stroke="#000" stroke-width="1.2" stroke-linejoin="miter" />
<rect x="320.5" y="557.5" width="12" height="13" fill="none" stroke="#ffff00" stroke-width="1" />
<line x1="321" y1="563.5" x2="332" y2="563.5" stroke="#00c0c0" stroke-width="1"/>
<rect x="326.5" y="557" width="3" height="9" fill="#fff" />
<polygon points="324.5,565 331.5,565 328,569.5" fill="#fff" />
<rect x="340.5" y="557.5" width="12" height="13" fill="none" stroke="#ffff00" stroke-width="1" />
<line x1="341" y1="563.5" x2="352" y2="563.5" stroke="#00c0c0" stroke-width="1"/>
<rect x="346.5" y="557" width="3" height="9" fill="#fff" />
<polygon points="344.5,565 351.5,565 348,569.5" fill="#fff" />
<g transform="translate(382,666)">
<path d="M33,9 L37.3,5.5 L39.5,12.5 L43.4,5.5 L45.5,12.5 L48.3,5.5 V10 M34,9.5 H47" stroke="#000" stroke-width="3.2" fill="none" stroke-linejoin="round"/>
<path d="M33,9 L37.3,5.5 L39.5,12.5 L43.4,5.5 L45.5,12.5 L48.3,5.5 V10" stroke="#a0a0a0" stroke-width="1.5" fill="none" stroke-linejoin="round"/>
<path d="M13.5,4.5 H32 L38.5,13.5 H13.5 Z" fill="#00ffff" stroke="#000" stroke-width="1.2"/>
<rect x="0.5" y="4.5" width="9.5" height="9" rx="2" fill="#00ffff" stroke="#000" stroke-width="1.2"/>
<rect x="10" y="7.5" width="2" height="3" fill="#00ffff" stroke="#000" stroke-width="0.8"/>
<rect x="4" y="10.5" width="2" height="2" fill="none" stroke="#000" stroke-width="0.8"/>
<rect x="11.8" y="3.5" width="2.2" height="11" fill="#00ffff" stroke="#000" stroke-width="1"/>
<path d="M17,2.5 H29 L28.3,5.3 H18 Z" fill="#00ffff" stroke="#000" stroke-width="1"/>
<rect x="15.5" y="0.5" width="15" height="2.2" rx="1" fill="#00ffff" stroke="#000" stroke-width="1"/>
</g>
<g transform="translate(773,231) rotate(180)">
<path d="M33,9 L37.3,5.5 L39.5,12.5 L43.4,5.5 L45.5,12.5 L48.3,5.5 V10 M34,9.5 H47" stroke="#000" stroke-width="3.2" fill="none" stroke-linejoin="round"/>
<path d="M33,9 L37.3,5.5 L39.5,12.5 L43.4,5.5 L45.5,12.5 L48.3,5.5 V10" stroke="#a0a0a0" stroke-width="1.5" fill="none" stroke-linejoin="round"/>
<path d="M13.5,4.5 H32 L38.5,13.5 H13.5 Z" fill="#00ffff" stroke="#000" stroke-width="1.2"/>
<rect x="0.5" y="4.5" width="9.5" height="9" rx="2" fill="#00ffff" stroke="#000" stroke-width="1.2"/>
<rect x="10" y="7.5" width="2" height="3" fill="#00ffff" stroke="#000" stroke-width="0.8"/>
<rect x="4" y="10.5" width="2" height="2" fill="none" stroke="#000" stroke-width="0.8"/>
<rect x="11.8" y="3.5" width="2.2" height="11" fill="#00ffff" stroke="#000" stroke-width="1"/>
<path d="M17,2.5 H29 L28.3,5.3 H18 Z" fill="#00ffff" stroke="#000" stroke-width="1"/>
<rect x="15.5" y="0.5" width="15" height="2.2" rx="1" fill="#00ffff" stroke="#000" stroke-width="1"/>
<circle cx="24.5" cy="9" r="2" fill="#ffe8b0" stroke="#000" stroke-width="0.5"/>
</g>
<g transform="translate(725,267)">
<rect x="0.5" y="11" width="52" height="2.5" fill="#00ffff" stroke="#000" stroke-width="1"/>
<path d="M1.5,11 V1 L5.5,3.5 L6.5,7 L5,11 Z" fill="#00ffff" stroke="#000" stroke-width="1"/>
<rect x="6.5" y="2" width="40.5" height="8.5" rx="1" fill="#00ffff" stroke="#000" stroke-width="1.2"/>
<path d="M9,9 H42" stroke="#0a9090" stroke-width="1"/>
<ellipse cx="45" cy="6.2" rx="1.8" ry="4.2" fill="#00ffff" stroke="#000" stroke-width="1"/>
<rect x="48.5" y="5" width="2.5" height="2.5" fill="#00ffff" stroke="#000" stroke-width="0.7"/><rect x="48.5" y="8" width="2.5" height="2.5" fill="#00ffff" stroke="#000" stroke-width="0.7"/>
</g>
<path d="M313.5,127.5 V147.5 H335.5 V175.5" stroke="#ffffff" stroke-width="1" fill="none" stroke-linecap="square"/>
<path d="M392.5,127.5 V147.5 H415.5 V175.5" stroke="#ffffff" stroke-width="1" fill="none" stroke-linecap="square"/>
<path d="M458.5,190.5 V199.5" stroke="#ffffff" stroke-width="1" fill="none" stroke-linecap="square"/>
<path d="M498.5,214.5 V224.5" stroke="#ffffff" stroke-width="1" fill="none" stroke-linecap="square"/>
<path d="M380.5,190.5 V269.5" stroke="#ffffff" stroke-width="1" fill="none" stroke-linecap="square"/>
<path d="M499.5,263.5 V315.5" stroke="#ffffff" stroke-width="1" fill="none" stroke-linecap="square"/>
<path d="M535.5,263.5 V315.5" stroke="#ffffff" stroke-width="1" fill="none" stroke-linecap="square"/>
<path d="M565.5,263.5 V315.5" stroke="#ffffff" stroke-width="1" fill="none" stroke-linecap="square"/>
<path d="M601.5,263.5 V315.5" stroke="#ffffff" stroke-width="1" fill="none" stroke-linecap="square"/>
<path d="M637.5,263.5 V315.5" stroke="#ffffff" stroke-width="1" fill="none" stroke-linecap="square"/>
<path d="M673.5,263.5 V315.5" stroke="#ffffff" stroke-width="1" fill="none" stroke-linecap="square"/>
<path d="M709.5,263.5 V315.5" stroke="#ffffff" stroke-width="1" fill="none" stroke-linecap="square"/>
<path d="M415.5,308.5 V315.5" stroke="#ffffff" stroke-width="1" fill="none" stroke-linecap="square"/>
<path d="M451.5,308.5 V315.5" stroke="#ffffff" stroke-width="1" fill="none" stroke-linecap="square"/>
<path d="M487.5,308.5 V315.5" stroke="#ffffff" stroke-width="1" fill="none" stroke-linecap="square"/>
<path d="M523.5,308.5 V315.5" stroke="#ffffff" stroke-width="1" fill="none" stroke-linecap="square"/>
<path d="M28.5,474.5 V496.5" stroke="#ffffff" stroke-width="1" fill="none" stroke-linecap="square"/>
<path d="M64.5,474.5 V496.5" stroke="#ffffff" stroke-width="1" fill="none" stroke-linecap="square"/>
<path d="M100.5,474.5 V496.5" stroke="#ffffff" stroke-width="1" fill="none" stroke-linecap="square"/>
<path d="M129.5,474.5 V496.5" stroke="#ffffff" stroke-width="1" fill="none" stroke-linecap="square"/>
<path d="M143.5,474.5 V532.5" stroke="#ffffff" stroke-width="1" fill="none" stroke-linecap="square"/>
<path d="M165.5,474.5 V496.5" stroke="#ffffff" stroke-width="1" fill="none" stroke-linecap="square"/>
<path d="M179.5,474.5 V532.5" stroke="#ffffff" stroke-width="1" fill="none" stroke-linecap="square"/>
<path d="M201.5,474.5 V496.5" stroke="#ffffff" stroke-width="1" fill="none" stroke-linecap="square"/>
<path d="M215.5,474.5 V532.5" stroke="#ffffff" stroke-width="1" fill="none" stroke-linecap="square"/>
<path d="M237.5,474.5 V496.5" stroke="#ffffff" stroke-width="1" fill="none" stroke-linecap="square"/>
<path d="M251.5,474.5 V532.5" stroke="#ffffff" stroke-width="1" fill="none" stroke-linecap="square"/>
<path d="M273.5,474.5 V496.5" stroke="#ffffff" stroke-width="1" fill="none" stroke-linecap="square"/>
<path d="M287.5,474.5 V532.5" stroke="#ffffff" stroke-width="1" fill="none" stroke-linecap="square"/>
<path d="M309.5,474.5 V496.5" stroke="#ffffff" stroke-width="1" fill="none" stroke-linecap="square"/>
<path d="M323.5,474.5 V532.5" stroke="#ffffff" stroke-width="1" fill="none" stroke-linecap="square"/>
<path d="M328.5,546.5 V557.5" stroke="#ffffff" stroke-width="1" fill="none" stroke-linecap="square"/>
<path d="M345.5,510.5 V557.5" stroke="#ffffff" stroke-width="1" fill="none" stroke-linecap="square"/>
<path d="M328.5,571.5 V583.5 L359.5,598.5" stroke="#ffffff" stroke-width="1" fill="none" stroke-linecap="square"/>
<path d="M345.5,571.5 V583.5 L313.5,598.5" stroke="#ffffff" stroke-width="1" fill="none" stroke-linecap="square"/>
<path d="M320.5,563.5 H313.5 V627.5" stroke="#ffffff" stroke-width="1" fill="none" stroke-linecap="square"/>
<path d="M353.5,563.5 H359.5 V627.5" stroke="#ffffff" stroke-width="1" fill="none" stroke-linecap="square"/>
<path d="M412.5,507.5 V524.5" stroke="#ffffff" stroke-width="1" fill="none" stroke-linecap="square"/>
<path d="M420.5,507.5 V576.5" stroke="#ffffff" stroke-width="1" fill="none" stroke-linecap="square"/>
<path d="M448.5,507.5 V524.5" stroke="#ffffff" stroke-width="1" fill="none" stroke-linecap="square"/>
<path d="M456.5,507.5 V576.5" stroke="#ffffff" stroke-width="1" fill="none" stroke-linecap="square"/>
<path d="M484.5,507.5 V524.5" stroke="#ffffff" stroke-width="1" fill="none" stroke-linecap="square"/>
<path d="M492.5,507.5 V576.5" stroke="#ffffff" stroke-width="1" fill="none" stroke-linecap="square"/>
<path d="M520.5,507.5 V524.5" stroke="#ffffff" stroke-width="1" fill="none" stroke-linecap="square"/>
<path d="M528.5,507.5 V576.5" stroke="#ffffff" stroke-width="1" fill="none" stroke-linecap="square"/>
<path d="M556.5,507.5 V524.5" stroke="#ffffff" stroke-width="1" fill="none" stroke-linecap="square"/>
<path d="M564.5,507.5 V576.5" stroke="#ffffff" stroke-width="1" fill="none" stroke-linecap="square"/>
<path d="M592.5,507.5 V524.5" stroke="#ffffff" stroke-width="1" fill="none" stroke-linecap="square"/>
<path d="M600.5,507.5 V576.5" stroke="#ffffff" stroke-width="1" fill="none" stroke-linecap="square"/>
<path d="M628.5,507.5 V524.5" stroke="#ffffff" stroke-width="1" fill="none" stroke-linecap="square"/>
<path d="M636.5,507.5 V576.5" stroke="#ffffff" stroke-width="1" fill="none" stroke-linecap="square"/>
<path d="M664.5,507.5 V524.5" stroke="#ffffff" stroke-width="1" fill="none" stroke-linecap="square"/>
<path d="M672.5,507.5 V576.5" stroke="#ffffff" stroke-width="1" fill="none" stroke-linecap="square"/>
<path d="M700.5,507.5 V524.5" stroke="#ffffff" stroke-width="1" fill="none" stroke-linecap="square"/>
<path d="M708.5,507.5 V576.5" stroke="#ffffff" stroke-width="1" fill="none" stroke-linecap="square"/>
<path d="M405.5,539.5 V555.5 H392.5 V603.5 H405.5" stroke="#ffffff" stroke-width="1" fill="none" stroke-linecap="square"/>
<path d="M405.5,591.5 V666.5" stroke="#ffffff" stroke-width="1" fill="none" stroke-linecap="square"/>
<path d="M499.5,539.5 V615.5" stroke="#ffffff" stroke-width="1" fill="none" stroke-linecap="square"/>
<path d="M516.5,539.5 V601.5 H499.5" stroke="#ffffff" stroke-width="1" fill="none" stroke-linecap="square"/>
<path d="M604.5,591.5 V617.5" stroke="#ffffff" stroke-width="1" fill="none" stroke-linecap="square"/>
<path d="M622.5,591.5 V601.5 H604.5" stroke="#ffffff" stroke-width="1" fill="none" stroke-linecap="square"/>
<path d="M714.5,591.5 V613.5" stroke="#ffffff" stroke-width="1" fill="none" stroke-linecap="square"/>
<path d="M733.5,539.5 V601.5 H714.5" stroke="#ffffff" stroke-width="1" fill="none" stroke-linecap="square"/>
<path d="M536.5,646.5 V668.5 H755.5 V689.5" stroke="#ffffff" stroke-width="1" fill="none" stroke-linecap="square"/>
<path d="M644.5,647.5 V658.5 H839.5 V689.5" stroke="#ffffff" stroke-width="1" fill="none" stroke-linecap="square"/>
<path d="M752.5,643.5 V648.5 H924.5 V689.5" stroke="#ffffff" stroke-width="1" fill="none" stroke-linecap="square"/>
<path d="M789.5,140.5 H810.5 V149.5" stroke="#ffffff" stroke-width="1" fill="none" stroke-linecap="square"/>
<path d="M873.5,140.5 H894.5 V149.5" stroke="#ffffff" stroke-width="1" fill="none" stroke-linecap="square"/>
<path d="M957.5,140.5 H978.5 V149.5" stroke="#ffffff" stroke-width="1" fill="none" stroke-linecap="square"/>
<path d="M797.5,168.5 V289.5 H824.5 V315.5" stroke="#ffffff" stroke-width="1" fill="none" stroke-linecap="square"/>
<path d="M810.5,168.5 V272.5 H881.5" stroke="#ffffff" stroke-width="1" fill="none" stroke-linecap="square"/>
<path d="M823.5,168.5 V253.5 H965.5" stroke="#ffffff" stroke-width="1" fill="none" stroke-linecap="square"/>
<path d="M881.5,168.5 V315.5" stroke="#ffffff" stroke-width="1" fill="none" stroke-linecap="square"/>
<path d="M894.5,168.5 V253.5" stroke="#ffffff" stroke-width="1" fill="none" stroke-linecap="square"/>
<path d="M907.5,168.5 V233.5 H978.5" stroke="#ffffff" stroke-width="1" fill="none" stroke-linecap="square"/>
<path d="M965.5,168.5 V253.5" stroke="#ffffff" stroke-width="1" fill="none" stroke-linecap="square"/>
<path d="M978.5,168.5 V233.5" stroke="#ffffff" stroke-width="1" fill="none" stroke-linecap="square"/>
<path d="M991.5,168.5 V315.5" stroke="#ffffff" stroke-width="1" fill="none" stroke-linecap="square"/>
<path d="M920.5,253.5 V315.5" stroke="#ffffff" stroke-width="1" fill="none" stroke-linecap="square"/>
<path d="M956.5,233.5 V315.5" stroke="#ffffff" stroke-width="1" fill="none" stroke-linecap="square"/>
<path d="M749.5,230.5 V267.5" stroke="#ffffff" stroke-width="1" fill="none" stroke-linecap="square"/>
<path d="M764.5,281.5 V315.5" stroke="#ffffff" stroke-width="1" fill="none" stroke-linecap="square"/>
<path d="M762.5,395.5 V400.5 H750.5 V427.5" stroke="#ffffff" stroke-width="1" fill="none" stroke-linecap="square"/>
<path d="M750.5,415.5 H838.5 V427.5" stroke="#ffffff" stroke-width="1" fill="none" stroke-linecap="square"/>
<path d="M794.5,415.5 V427.5" stroke="#ffffff" stroke-width="1" fill="none" stroke-linecap="square"/>
<path d="M822.5,395.5 V407.5" stroke="#ffffff" stroke-width="1" fill="none" stroke-linecap="square"/>
<path d="M760.5,407.5 H848.5 V427.5" stroke="#ffffff" stroke-width="1" fill="none" stroke-linecap="square"/>
<path d="M760.5,407.5 V427.5" stroke="#ffffff" stroke-width="1" fill="none" stroke-linecap="square"/>
<path d="M804.5,407.5 V427.5" stroke="#ffffff" stroke-width="1" fill="none" stroke-linecap="square"/>
<rect x="311.8" y="597.1" width="3.6" height="3.6" fill="#fff" />
<rect x="357.7" y="597.1" width="3.6" height="3.6" fill="#fff" />
<rect x="403.2" y="601.5" width="3.6" height="3.6" fill="#fff" />
<rect x="497.4" y="599.5" width="3.6" height="3.6" fill="#fff" />
<rect x="602.9000000000001" y="599.5" width="3.6" height="3.6" fill="#fff" />
<rect x="712.5" y="599.5" width="3.6" height="3.6" fill="#fff" />
<rect x="879.3000000000001" y="270.5" width="3.6" height="3.6" fill="#fff" />
<rect x="892.2" y="251.6" width="3.6" height="3.6" fill="#fff" />
<rect x="918.7" y="251.6" width="3.6" height="3.6" fill="#fff" />
<rect x="954.7" y="232.1" width="3.6" height="3.6" fill="#fff" />
<rect x="748.8000000000001" y="413.2" width="3.6" height="3.6" fill="#fff" />
<rect x="792.4000000000001" y="413.2" width="3.6" height="3.6" fill="#fff" />
<rect x="802.6" y="405.7" width="3.6" height="3.6" fill="#fff" />
<rect x="820.6" y="405.7" width="3.6" height="3.6" fill="#fff" />
<rect x="261.5" y="106.5" width="15" height="17" fill="none" stroke="#ffff00" stroke-width="1" />
<text x="269.5" y="120.1" font-family="Liberation Sans" font-size="12.6" fill="#fff" text-anchor="middle" font-weight="normal" font-style="normal" letter-spacing="1.1" stroke="#fff" stroke-width="0.5">4</text>
<rect x="339.5" y="106.5" width="15" height="17" fill="none" stroke="#ffff00" stroke-width="1" />
<text x="347.5" y="120.1" font-family="Liberation Sans" font-size="12.6" fill="#fff" text-anchor="middle" font-weight="normal" font-style="normal" letter-spacing="1.1" stroke="#fff" stroke-width="0.5">3</text>
<rect x="305.5" y="173.5" width="15" height="17" fill="none" stroke="#ffff00" stroke-width="1" />
<text x="313.5" y="187.1" font-family="Liberation Sans" font-size="12.6" fill="#fff" text-anchor="middle" font-weight="normal" font-style="normal" letter-spacing="1.1" stroke="#fff" stroke-width="0.5">6</text>
<rect x="470.5" y="173.5" width="15" height="17" fill="none" stroke="#ffff00" stroke-width="1" />
<text x="478.5" y="187.1" font-family="Liberation Sans" font-size="12.6" fill="#fff" text-anchor="middle" font-weight="normal" font-style="normal" letter-spacing="1.1" stroke="#fff" stroke-width="0.5">5</text>
<rect x="510.5" y="197.5" width="15" height="17" fill="none" stroke="#ffff00" stroke-width="1" />
<text x="518.5" y="211.1" font-family="Liberation Sans" font-size="12.6" fill="#fff" text-anchor="middle" font-weight="normal" font-style="normal" letter-spacing="1.1" stroke="#fff" stroke-width="0.5">7</text>
<rect x="679.5" y="204.5" width="15" height="17" fill="none" stroke="#ffff00" stroke-width="1" />
<text x="687.5" y="218.1" font-family="Liberation Sans" font-size="12.6" fill="#fff" text-anchor="middle" font-weight="normal" font-style="normal" letter-spacing="1.1" stroke="#fff" stroke-width="0.5">9</text>
<rect x="351.5" y="267.5" width="15" height="17" fill="none" stroke="#ffff00" stroke-width="1" />
<text x="359.5" y="281.1" font-family="Liberation Sans" font-size="12.6" fill="#fff" text-anchor="middle" font-weight="normal" font-style="normal" letter-spacing="1.1" stroke="#fff" stroke-width="0.5">8</text>
<rect x="17.5" y="516.5" width="15" height="17" fill="none" stroke="#ffff00" stroke-width="1" />
<text x="25.5" y="530.1" font-family="Liberation Sans" font-size="12.6" fill="#fff" text-anchor="middle" font-weight="normal" font-style="normal" letter-spacing="1.1" stroke="#fff" stroke-width="0.5">1</text>
<rect x="125.5" y="552.5" width="15" height="17" fill="none" stroke="#ffff00" stroke-width="1" />
<text x="133.5" y="566.1" font-family="Liberation Sans" font-size="12.6" fill="#fff" text-anchor="middle" font-weight="normal" font-style="normal" letter-spacing="1.1" stroke="#fff" stroke-width="0.5">2</text>
<rect x="433.5" y="543.5" width="16" height="17" fill="none" stroke="#ffff00" stroke-width="1" />
<text x="442.0" y="557.1" font-family="Liberation Sans" font-size="12.6" fill="#fff" text-anchor="middle" font-weight="normal" font-style="normal" letter-spacing="1.1" stroke="#fff" stroke-width="0.5">R</text>
<rect x="465.5" y="543.5" width="23" height="17" fill="none" stroke="#ffff00" stroke-width="1" />
<text x="477.5" y="557.1" font-family="Liberation Sans" font-size="12.6" fill="#fff" text-anchor="middle" font-weight="normal" font-style="normal" letter-spacing="1.1" stroke="#fff" stroke-width="0.5">21</text>
<rect x="540.5" y="543.5" width="16" height="17" fill="none" stroke="#ffff00" stroke-width="1" />
<text x="549.0" y="557.1" font-family="Liberation Sans" font-size="12.6" fill="#fff" text-anchor="middle" font-weight="normal" font-style="normal" letter-spacing="1.1" stroke="#fff" stroke-width="0.5">R</text>
<rect x="681.5" y="543.5" width="23" height="17" fill="none" stroke="#ffff00" stroke-width="1" />
<text x="693.5" y="557.1" font-family="Liberation Sans" font-size="12.6" fill="#fff" text-anchor="middle" font-weight="normal" font-style="normal" letter-spacing="1.1" stroke="#fff" stroke-width="0.5">22</text>
<rect x="415.5" y="595.5" width="16" height="17" fill="none" stroke="#ffff00" stroke-width="1" />
<text x="424.0" y="609.1" font-family="Liberation Sans" font-size="12.6" fill="#fff" text-anchor="middle" font-weight="normal" font-style="normal" letter-spacing="1.1" stroke="#fff" stroke-width="0.5">R</text>
<rect x="567.5" y="595.5" width="23" height="17" fill="none" stroke="#ffff00" stroke-width="1" />
<text x="579.5" y="609.1" font-family="Liberation Sans" font-size="12.6" fill="#fff" text-anchor="middle" font-weight="normal" font-style="normal" letter-spacing="1.1" stroke="#fff" stroke-width="0.5">20</text>
<rect x="629.5" y="595.5" width="16" height="17" fill="none" stroke="#ffff00" stroke-width="1" />
<text x="638.0" y="609.1" font-family="Liberation Sans" font-size="12.6" fill="#fff" text-anchor="middle" font-weight="normal" font-style="normal" letter-spacing="1.1" stroke="#fff" stroke-width="0.5">R</text>
<rect x="681.5" y="595.5" width="23" height="17" fill="none" stroke="#ffff00" stroke-width="1" />
<text x="693.5" y="609.1" font-family="Liberation Sans" font-size="12.6" fill="#fff" text-anchor="middle" font-weight="normal" font-style="normal" letter-spacing="1.1" stroke="#fff" stroke-width="0.5">23</text>
<rect x="467.5" y="622.5" width="23" height="17" fill="none" stroke="#ffff00" stroke-width="1" />
<text x="479.5" y="636.1" font-family="Liberation Sans" font-size="12.6" fill="#fff" text-anchor="middle" font-weight="normal" font-style="normal" letter-spacing="1.1" stroke="#fff" stroke-width="0.5">24</text>
<rect x="572.5" y="624.5" width="23" height="16" fill="none" stroke="#ffff00" stroke-width="1" />
<text x="584.5" y="637.1" font-family="Liberation Sans" font-size="12.6" fill="#fff" text-anchor="middle" font-weight="normal" font-style="normal" letter-spacing="1.1" stroke="#fff" stroke-width="0.5">25</text>
<rect x="682.5" y="620.5" width="23" height="17" fill="none" stroke="#ffff00" stroke-width="1" />
<text x="694.5" y="634.1" font-family="Liberation Sans" font-size="12.6" fill="#fff" text-anchor="middle" font-weight="normal" font-style="normal" letter-spacing="1.1" stroke="#fff" stroke-width="0.5">26</text>
<rect x="384.5" y="684.5" width="37" height="17" fill="none" stroke="#ffff00" stroke-width="1" />
<text x="403.5" y="698.1" font-family="Liberation Sans" font-size="12.6" fill="#fff" text-anchor="middle" font-weight="normal" font-style="normal" letter-spacing="1.1" stroke="#fff" stroke-width="0.5">30-1</text>
<rect x="731.5" y="193.5" width="37" height="17" fill="none" stroke="#ffff00" stroke-width="1" />
<text x="750.5" y="207.1" font-family="Liberation Sans" font-size="12.6" fill="#fff" text-anchor="middle" font-weight="normal" font-style="normal" letter-spacing="1.1" stroke="#fff" stroke-width="0.5">30-2</text>
<rect x="727.5" y="287.5" width="23" height="17" fill="none" stroke="#ffff00" stroke-width="1" />
<text x="739.5" y="301.1" font-family="Liberation Sans" font-size="12.6" fill="#fff" text-anchor="middle" font-weight="normal" font-style="normal" letter-spacing="1.1" stroke="#fff" stroke-width="0.5">40</text>
<rect x="762.5" y="97.5" width="23" height="17" fill="none" stroke="#ffff00" stroke-width="1" />
<text x="774.5" y="111.1" font-family="Liberation Sans" font-size="12.6" fill="#fff" text-anchor="middle" font-weight="normal" font-style="normal" letter-spacing="1.1" stroke="#fff" stroke-width="0.5">27</text>
<rect x="846.5" y="97.5" width="23" height="17" fill="none" stroke="#ffff00" stroke-width="1" />
<text x="858.5" y="111.1" font-family="Liberation Sans" font-size="12.6" fill="#fff" text-anchor="middle" font-weight="normal" font-style="normal" letter-spacing="1.1" stroke="#fff" stroke-width="0.5">28</text>
<rect x="930.5" y="97.5" width="23" height="17" fill="none" stroke="#ffff00" stroke-width="1" />
<text x="942.5" y="111.1" font-family="Liberation Sans" font-size="12.6" fill="#fff" text-anchor="middle" font-weight="normal" font-style="normal" letter-spacing="1.1" stroke="#fff" stroke-width="0.5">29</text>
<rect x="404.5" y="457.5" width="23" height="17" fill="none" stroke="#ffff00" stroke-width="1" />
<text x="416.5" y="471.1" font-family="Liberation Sans" font-size="12.6" fill="#fff" text-anchor="middle" font-weight="normal" font-style="normal" letter-spacing="1.1" stroke="#fff" stroke-width="0.5">11</text>
<rect x="440.5" y="457.5" width="23" height="17" fill="none" stroke="#ffff00" stroke-width="1" />
<text x="452.5" y="471.1" font-family="Liberation Sans" font-size="12.6" fill="#fff" text-anchor="middle" font-weight="normal" font-style="normal" letter-spacing="1.1" stroke="#fff" stroke-width="0.5">12</text>
<rect x="476.5" y="457.5" width="23" height="17" fill="none" stroke="#ffff00" stroke-width="1" />
<text x="488.5" y="471.1" font-family="Liberation Sans" font-size="12.6" fill="#fff" text-anchor="middle" font-weight="normal" font-style="normal" letter-spacing="1.1" stroke="#fff" stroke-width="0.5">13</text>
<rect x="512.5" y="457.5" width="23" height="17" fill="none" stroke="#ffff00" stroke-width="1" />
<text x="524.5" y="471.1" font-family="Liberation Sans" font-size="12.6" fill="#fff" text-anchor="middle" font-weight="normal" font-style="normal" letter-spacing="1.1" stroke="#fff" stroke-width="0.5">14</text>
<rect x="548.5" y="457.5" width="23" height="17" fill="none" stroke="#ffff00" stroke-width="1" />
<text x="560.5" y="471.1" font-family="Liberation Sans" font-size="12.6" fill="#fff" text-anchor="middle" font-weight="normal" font-style="normal" letter-spacing="1.1" stroke="#fff" stroke-width="0.5">15</text>
<rect x="584.5" y="457.5" width="23" height="17" fill="none" stroke="#ffff00" stroke-width="1" />
<text x="596.5" y="471.1" font-family="Liberation Sans" font-size="12.6" fill="#fff" text-anchor="middle" font-weight="normal" font-style="normal" letter-spacing="1.1" stroke="#fff" stroke-width="0.5">16</text>
<rect x="620.5" y="457.5" width="23" height="17" fill="none" stroke="#ffff00" stroke-width="1" />
<text x="632.5" y="471.1" font-family="Liberation Sans" font-size="12.6" fill="#fff" text-anchor="middle" font-weight="normal" font-style="normal" letter-spacing="1.1" stroke="#fff" stroke-width="0.5">17</text>
<rect x="656.5" y="457.5" width="23" height="17" fill="none" stroke="#ffff00" stroke-width="1" />
<text x="668.5" y="471.1" font-family="Liberation Sans" font-size="12.6" fill="#fff" text-anchor="middle" font-weight="normal" font-style="normal" letter-spacing="1.1" stroke="#fff" stroke-width="0.5">18</text>
<rect x="692.5" y="457.5" width="23" height="17" fill="none" stroke="#ffff00" stroke-width="1" />
<text x="704.5" y="471.1" font-family="Liberation Sans" font-size="12.6" fill="#fff" text-anchor="middle" font-weight="normal" font-style="normal" letter-spacing="1.1" stroke="#fff" stroke-width="0.5">19</text>
</svg></body></html>
